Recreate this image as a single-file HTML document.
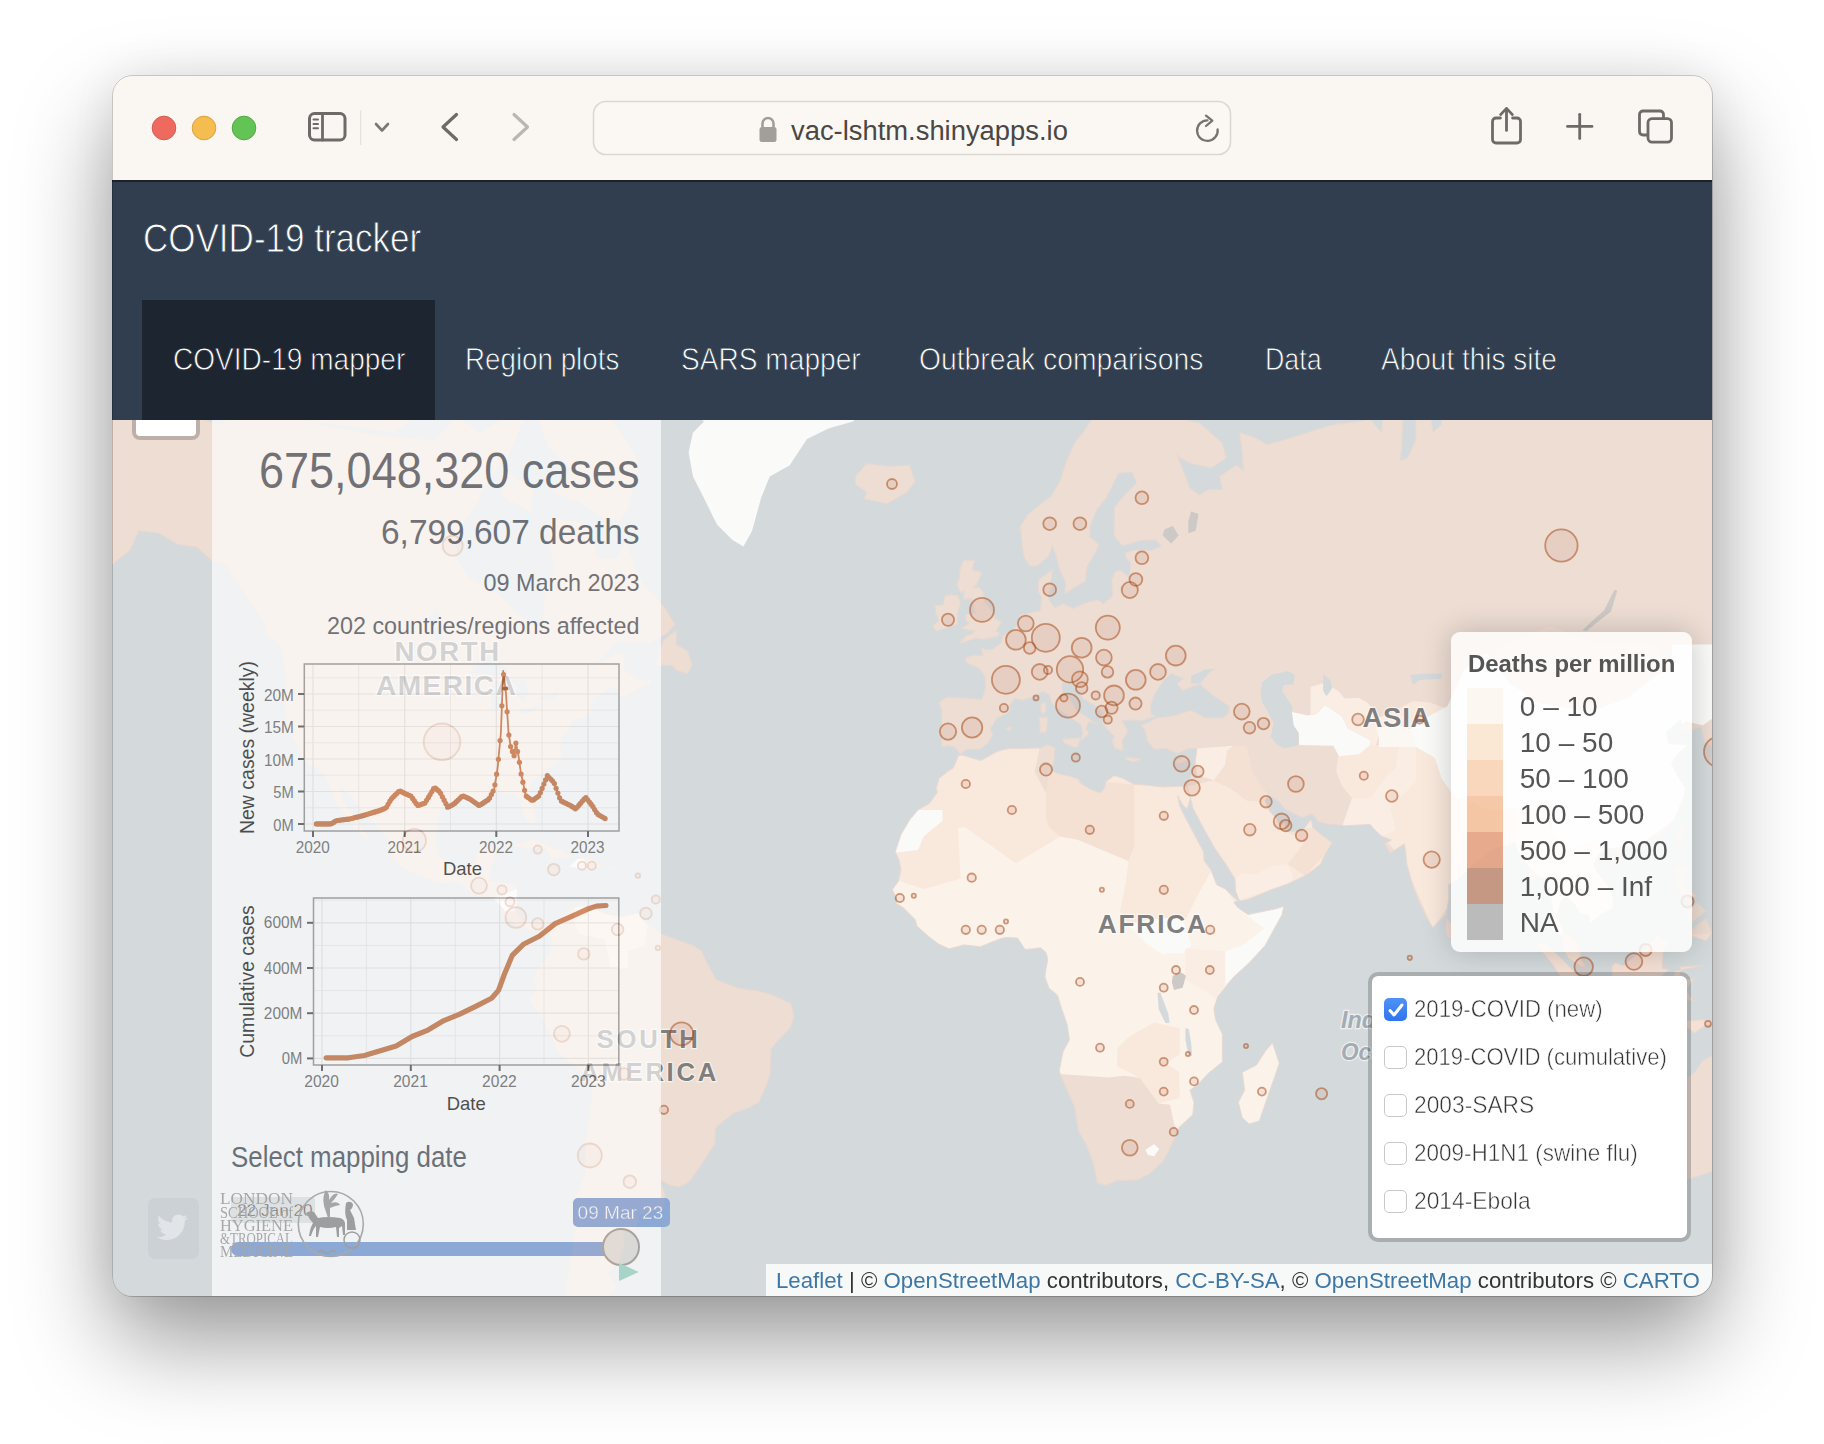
<!DOCTYPE html>
<html><head><meta charset="utf-8">
<style>
*{margin:0;padding:0;box-sizing:border-box}
html,body{width:1824px;height:1444px;background:#fff;overflow:hidden;font-family:"Liberation Sans",sans-serif}
#shadow{position:absolute;left:112px;top:75px;width:1600px;height:1221px;border-radius:20px;
 box-shadow:0 45px 95px rgba(0,0,0,0.40),0 0 45px rgba(0,0,0,0.07)}
#win{position:absolute;left:112px;top:75px;width:1600px;height:1221px;border-radius:20px;overflow:hidden;background:#faf6f1}
#border{position:absolute;left:111.5px;top:74.5px;width:1601px;height:1222px;border-radius:20.5px;border:1px solid rgba(0,0,0,0.2);pointer-events:none}
.abs{position:absolute}
.t{position:absolute;white-space:nowrap}
</style></head><body>
<div id="shadow"></div>
<div id="win">
 <div class="abs" style="left:0;top:0;width:1600px;height:105px;background:#faf6f1"><svg class="abs" style="left:-112px;top:-75px" width="1824" height="1444" viewBox="0 0 1824 1444">
<rect x="593.5" y="101.5" width="637" height="53" rx="12.5" fill="#fbf8f4" stroke="#dcd7d1" stroke-width="1.6"/>
<g stroke-width="1" >
<circle cx="164" cy="128" r="11.8" fill="#ee6a5f" stroke="#d35a4f"/>
<circle cx="204" cy="128" r="11.8" fill="#f5bd4f" stroke="#d9a23c"/>
<circle cx="244" cy="128" r="11.8" fill="#61c454" stroke="#52a844"/>
</g>
<g fill="none" stroke="#6e6a67" stroke-linecap="round" stroke-linejoin="round">
<rect x="309.5" y="113.5" width="35.5" height="26.5" rx="5" stroke-width="3"/>
<line x1="322.5" y1="114" x2="322.5" y2="140" stroke-width="2.8"/>
<line x1="313.5" y1="119.6" x2="318" y2="119.6" stroke-width="2"/>
<line x1="313.5" y1="124" x2="318" y2="124" stroke-width="2"/>
<line x1="313.5" y1="128.3" x2="318" y2="128.3" stroke-width="2"/>
<polyline points="376,124 382,130.5 388,124" stroke-width="2.6" stroke="#7b7774"/>
<polyline points="456.5,114.5 443,127 456.5,139.5" stroke-width="3.2"/>
<polyline points="514,114.5 527.5,127 514,139.5" stroke-width="3.2" stroke="#bab6b2"/>
<path d="M1500.4 118 H1496 a3.5 3.5 0 0 0 -3.5 3.5 V139.5 a3.5 3.5 0 0 0 3.5 3.5 H1517 a3.5 3.5 0 0 0 3.5 -3.5 V121.5 a3.5 3.5 0 0 0 -3.5 -3.5 H1512.6" stroke-width="2.8"/>
<line x1="1506.5" y1="109" x2="1506.5" y2="130.4" stroke-width="2.8"/>
<polyline points="1500.6,114.6 1506.5,108.4 1512.4,114.6" stroke-width="2.8"/>
<line x1="1567.5" y1="126.4" x2="1592" y2="126.4" stroke-width="2.8"/>
<line x1="1579.7" y1="114.3" x2="1579.7" y2="138.6" stroke-width="2.8"/>
<path d="M1647.5 135 H1643 a3.5 3.5 0 0 1 -3.5 -3.5 V114.5 a3.5 3.5 0 0 1 3.5 -3.5 H1660 a3.5 3.5 0 0 1 3.5 3.5 V118" stroke-width="2.8"/>
<rect x="1648" y="118.6" width="23.5" height="23.5" rx="4" stroke-width="2.8"/>
<path d="M1207.5 120.3 A10.3 10.3 0 1 0 1217.6 129.3" stroke-width="2.3" stroke="#77736f"/>
<polyline points="1206,115.6 1212.3,120.6 1206,126" stroke-width="2.3" stroke="#77736f"/>
</g>
<line x1="360.7" y1="110.5" x2="360.7" y2="145" stroke="#e3dfda" stroke-width="1.2"/>
<rect x="759.5" y="127" width="17" height="15" rx="2.5" fill="#a29e9a"/>
<path d="M762.5 128 V123.5 a5.5 5.5 0 0 1 11 0 V128" fill="none" stroke="#a29e9a" stroke-width="2.6"/>
</svg></div>
 <div class="abs" style="left:-112px;top:-75px;width:1824px;height:200px"><div class="t" style="left:791.0px;top:116.0px;font-size:28.34px;line-height:28.34px;color:#4a4744;transform:scaleX(0.9662);transform-origin:0 0;">vac-lshtm.shinyapps.io</div></div>
 <div class="abs" style="left:0;top:345px;width:1600px;height:876px;overflow:hidden">
  <svg class="abs" style="left:0;top:0" width="1600" height="876" viewBox="112 420 1600 876">
<defs><clipPath id="landclip"><path d="M100.0 386.0L189.9 414.9L218.3 424.6L263.8 405.0L326.4 426.2L377.6 435.5L434.5 440.1L457.2 416.6L480.0 432.4L508.4 416.6L525.5 416.6L505.6 462.2L501.6 462.2L480.0 496.2L476.0 505.2L456.1 533.2L456.1 558.2L468.6 577.4L497.1 592.8L523.8 618.1L542.6 631.1L543.7 597.8L554.0 566.8L548.3 539.0L551.1 518.8L576.7 521.3L593.8 533.2L596.6 558.2L616.5 558.2L625.1 541.3L642.1 582.6L664.9 607.6L675.1 624.6L667.7 632.9L650.7 642.8L616.5 642.8L596.6 663.6L622.2 651.6L625.1 657.6L623.4 670.3L645.0 681.9L650.7 677.0L650.7 682.7L619.4 698.6L616.5 686.7L610.8 688.3L593.8 697.1L590.4 705.6L593.8 712.5L582.4 717.8L571.0 721.6L570.5 729.0L562.5 736.4L559.6 747.1L562.5 759.1L551.1 766.0L542.6 772.9L531.8 781.7L528.9 791.7L534.0 808.0L536.9 817.6L534.6 825.8L528.4 822.0L522.1 811.2L521.0 800.2L514.1 794.3L502.8 792.3L488.5 793.0L482.8 798.2L484.6 801.5L477.2 800.8L462.9 796.9L453.3 799.5L440.2 809.3L438.5 820.7L435.6 843.8L440.2 857.8L445.9 865.1L454.4 868.7L468.6 866.3L475.4 860.9L477.7 851.8L491.4 848.1L497.1 849.3L494.2 860.9L490.2 869.9L489.7 881.8L502.8 882.4L514.1 884.7L517.5 888.9L517.0 902.3L515.3 911.0L522.7 919.7L531.2 923.2L539.7 919.7L548.3 921.4L552.2 924.9L548.8 932.4L548.3 931.2L536.9 931.8L528.4 929.5L517.0 925.5L504.5 916.8L503.9 909.9L494.2 899.4L482.8 896.5L471.5 893.6L462.9 884.7L453.3 880.6L443.0 883.5L431.6 880.0L417.4 874.6L403.2 868.1L391.8 857.8L393.0 848.7L389.0 840.7L377.6 827.0L363.4 811.2L352.0 798.2L339.5 785.0L343.5 801.5L354.8 817.6L366.2 833.3L369.1 839.5L363.4 836.4L354.8 828.3L343.5 811.2L337.8 808.0L328.7 785.0L325.8 778.3L317.9 768.1L305.9 764.0L299.1 752.1L295.1 741.4L287.7 726.8L284.9 710.3L286.6 677.0L282.6 658.5L280.9 644.6L266.7 635.6L263.8 621.8L249.6 602.7L243.9 592.8L232.5 577.4L224.0 563.6L212.6 561.4L196.7 547.0L178.5 544.7L158.6 533.2L138.7 530.8L130.1 550.4L115.9 561.4L98.8 577.4L76.1 592.8L59.0 600.7L93.2 569.0L93.2 555.9L70.4 544.7L56.2 539.0L50.5 521.3L56.2 506.4L76.1 489.6L53.3 488.3L36.3 474.8L70.4 462.2L61.9 452.1L44.8 435.5L70.4 411.7L93.2 393.0ZM552.2 924.9L559.6 919.7L562.5 913.9L571.0 909.3L582.4 902.9L588.1 908.1L585.2 913.9L593.8 908.1L605.2 913.9L622.2 916.2L639.3 912.8L645.0 922.6L662.0 934.1L679.1 940.4L693.3 945.5L701.9 951.2L707.6 963.8L713.2 974.0L716.1 979.7L738.8 988.2L758.8 991.1L773.0 995.1L791.2 1003.6L794.0 1016.8L790.0 1028.3L778.7 1039.9L771.3 1048.6L770.1 1075.1L765.6 1087.1L758.8 1102.3L747.4 1108.5L733.2 1113.5L716.1 1127.3L715.0 1143.3L704.7 1159.6L693.3 1176.5L687.6 1183.3L679.1 1186.8L670.6 1185.4L659.2 1179.9L664.9 1193.8L664.9 1208.0L639.3 1215.3L636.4 1230.2L622.2 1230.2L625.1 1241.6L619.4 1261.3L608.0 1273.5L616.5 1286.1L602.3 1307.9L599.5 1321.5L602.3 1330.9L593.8 1350.2L576.7 1330.9L565.3 1303.4L568.2 1269.4L573.9 1237.7L573.9 1200.9L585.2 1173.1L585.2 1140.0L590.9 1108.5L592.6 1081.1L582.4 1072.2L559.6 1054.4L548.3 1031.2L539.7 1013.9L529.5 1001.3L536.9 988.2L534.0 979.7L536.9 968.3L543.7 962.6L551.1 951.2L551.7 936.9L548.8 932.4ZM960.1 754.2L956.2 748.6L949.9 745.7L941.4 747.1L941.9 736.4L938.0 734.2L941.4 723.8L941.9 710.3L939.1 702.5L946.5 697.1L959.0 697.8L970.4 698.6L981.8 699.4L985.2 689.9L985.2 677.0L979.5 668.7L966.4 662.8L964.7 658.5L973.8 655.1L982.9 655.9L981.2 647.2L985.7 649.8L993.1 649.0L1001.1 642.8L1002.8 635.6L1010.2 632.0L1017.6 624.6L1019.9 615.2L1031.8 612.4L1040.4 610.5L1041.5 597.8L1038.1 591.8L1038.6 579.5L1052.3 570.0L1051.7 577.4L1050.0 585.7L1054.0 583.6L1047.8 594.8L1050.0 601.7L1054.6 607.6L1063.1 603.7L1072.8 608.5L1085.9 602.7L1097.8 599.8L1103.5 603.7L1112.6 595.8L1111.5 580.5L1114.9 572.2L1120.6 570.0L1129.1 577.4L1130.8 563.6L1125.7 557.1L1125.7 552.6L1133.1 550.4L1151.3 550.4L1161.5 545.9L1155.8 540.2L1142.8 540.2L1134.2 542.5L1122.3 545.9L1113.7 535.5L1114.3 524.9L1114.3 507.7L1123.4 496.2L1136.5 483.0L1131.9 472.0L1118.3 473.4L1113.2 484.3L1105.8 498.8L1097.2 508.9L1090.4 524.9L1089.8 536.7L1099.0 544.7L1095.5 552.6L1087.0 566.8L1085.3 581.6L1075.6 586.7L1064.8 593.8L1065.4 581.6L1059.7 570.0L1055.7 554.8L1052.3 545.9L1048.9 555.9L1037.5 565.8L1029.5 565.8L1023.9 557.1L1021.6 540.2L1020.4 526.1L1027.3 515.2L1040.4 503.9L1051.2 496.2L1060.3 480.3L1066.0 462.2L1074.5 443.1L1083.0 432.4L1097.2 411.7L1117.2 403.3L1138.8 389.5L1151.3 391.3L1168.4 403.3L1179.7 418.2L1199.6 423.0L1222.4 443.1L1226.4 457.9L1211.6 467.9L1191.1 463.6L1179.7 457.9L1176.9 453.5L1190.0 488.3L1199.6 494.9L1208.2 489.6L1222.4 489.6L1219.6 476.2L1236.6 465.0L1243.4 470.6L1242.3 453.5L1239.5 432.4L1253.7 437.1L1267.9 444.6L1293.5 437.1L1322.0 427.8L1333.3 424.6L1370.3 419.8L1381.7 432.4L1384.5 354.4L1404.4 358.3L1404.4 391.3L1401.6 447.6L1400.5 460.8L1407.3 457.9L1415.8 440.1L1415.8 408.3L1410.1 382.4L1430.0 364.0L1435.7 391.3L1430.0 411.7L1432.9 432.4L1441.4 424.6L1447.1 354.4L1560.9 266.0L1634.8 344.6L1731.6 391.3L1845.3 373.4L1902.2 408.3L1959.1 408.3L2016.0 424.6L2016.0 483.0L2004.6 515.2L1930.7 544.7L1919.3 587.7L1882.3 635.6L1879.5 572.2L1873.8 552.6L1834.0 552.6L1794.1 555.9L1760.0 602.7L1791.3 617.1L1795.8 661.9L1788.4 670.3L1760.0 700.2L1742.4 701.8L1735.5 708.0L1729.8 719.4L1723.0 736.4L1728.7 750.7L1727.0 759.8L1717.3 764.7L1710.5 764.0L1711.6 747.1L1704.2 741.4L1701.4 726.8L1683.2 732.7L1680.4 720.1L1666.1 732.0L1669.0 743.6L1688.9 745.0L1677.5 754.2L1671.3 763.3L1679.2 778.3L1685.5 788.4L1683.2 804.7L1673.0 821.4L1660.4 835.8L1641.7 843.8L1623.5 849.9L1618.9 856.0L1611.0 848.1L1599.0 854.8L1593.9 863.9L1597.9 872.9L1608.1 884.7L1613.8 899.4L1613.2 908.1L1600.7 915.1L1589.3 924.3L1589.3 915.7L1580.2 913.4L1574.0 904.1L1566.0 897.1L1560.9 902.3L1556.3 916.8L1562.6 926.6L1563.7 934.1L1569.4 935.2L1575.7 939.8L1580.2 948.4L1580.2 958.1L1585.4 966.0L1580.8 966.6L1568.3 958.1L1563.2 948.4L1563.2 938.1L1559.8 935.2L1551.2 928.3L1552.9 913.9L1550.6 896.5L1547.2 878.8L1539.3 877.0L1533.6 883.0L1528.5 880.6L1527.9 865.1L1520.5 856.0L1516.5 848.7L1514.8 842.0L1506.8 845.7L1498.3 847.5L1486.4 854.2L1475.6 862.1L1460.2 878.2L1448.8 884.7L1448.8 899.4L1446.0 915.1L1436.9 923.2L1432.9 927.8L1426.1 917.4L1418.7 901.2L1413.0 886.5L1406.7 863.9L1405.6 851.8L1404.4 843.8L1390.2 853.0L1384.5 843.8L1391.4 840.1L1381.7 836.4L1373.2 828.3L1370.3 824.5L1344.7 825.8L1326.5 823.9L1318.0 821.4L1312.3 813.7L1302.0 817.6L1285.5 809.3L1277.6 800.2L1268.5 795.6L1265.1 800.2L1269.6 811.2L1277.0 819.5L1279.9 827.0L1285.0 821.4L1285.5 831.4L1301.5 831.4L1306.6 825.2L1311.1 819.5L1312.9 827.7L1320.8 834.5L1332.2 842.6L1324.8 854.8L1320.8 863.9L1313.4 869.9L1304.9 875.8L1289.0 883.5L1270.8 890.0L1248.0 899.4L1239.5 901.2L1235.5 890.6L1234.9 878.8L1226.4 865.1L1215.0 848.7L1203.6 828.3L1192.8 808.0L1190.5 798.2L1186.6 786.4L1190.5 776.3L1194.0 768.8L1195.7 757.7L1196.8 748.6L1188.8 748.6L1176.9 753.5L1166.1 748.6L1154.1 749.3L1147.3 740.7L1144.5 729.0L1141.0 725.3L1148.4 722.4L1157.0 717.8L1171.2 716.3L1191.1 710.3L1205.3 717.8L1222.4 717.8L1228.7 713.3L1229.2 706.4L1218.4 699.4L1205.3 689.1L1200.2 684.3L1194.0 685.9L1182.6 690.7L1176.9 683.5L1183.7 678.6L1171.2 673.7L1163.8 680.2L1160.4 685.1L1154.7 694.7L1150.7 704.9L1151.3 714.1L1156.4 716.0L1141.6 720.9L1128.5 720.1L1122.3 720.9L1128.0 731.2L1122.3 740.7L1123.4 750.7L1114.9 748.6L1112.0 740.7L1114.3 736.4L1107.5 729.8L1102.4 722.4L1102.9 712.5L1097.2 707.2L1083.0 698.6L1075.1 686.7L1069.9 681.9L1062.0 683.5L1062.5 693.1L1069.4 697.8L1076.2 710.3L1083.6 714.8L1097.2 724.6L1088.7 721.6L1085.9 729.0L1089.3 733.4L1080.7 740.7L1082.5 734.2L1081.3 725.3L1073.4 719.4L1063.1 712.5L1051.7 703.3L1049.5 694.7L1042.1 691.5L1034.7 696.3L1022.2 700.2L1014.8 698.6L1009.1 705.6L1010.2 711.0L1004.5 714.8L997.1 717.8L990.3 729.0L993.1 734.9L988.0 742.9L980.1 749.3L967.0 749.3ZM958.4 755.6L953.3 768.1L948.8 770.8L939.1 778.3L936.2 788.4L937.4 792.3L929.4 803.4L918.0 809.9L909.5 820.1L901.0 834.5L895.3 851.8L899.3 860.9L901.0 869.9L898.1 881.8L892.4 889.4L897.0 899.4L896.4 903.5L903.8 908.1L909.5 913.9L915.2 919.7L916.9 926.0L926.6 934.7L938.0 943.8L949.3 948.9L963.6 944.9L980.6 946.7L992.0 942.1L1000.5 938.7L1006.2 937.5L1017.6 938.1L1025.0 949.5L1031.8 948.9L1040.4 947.8L1046.0 952.4L1047.8 959.8L1046.0 968.3L1044.9 976.8L1048.9 988.2L1057.4 995.1L1061.4 1008.2L1067.1 1024.3L1069.4 1039.9L1063.1 1051.5L1059.1 1071.0L1063.1 1081.1L1074.5 1106.7L1078.5 1131.1L1085.9 1143.9L1093.3 1163.0L1096.7 1179.2L1097.2 1182.6L1105.8 1185.4L1117.2 1180.6L1137.6 1179.9L1150.7 1173.1L1162.7 1161.6L1168.4 1151.7L1179.2 1127.3L1192.8 1114.7L1194.0 1102.3L1190.0 1090.2L1199.6 1082.9L1207.6 1073.9L1222.4 1062.1L1222.4 1034.1L1215.6 1019.7L1213.9 1008.2L1217.8 996.8L1228.1 983.7L1233.8 976.8L1249.7 962.6L1265.1 945.5L1282.1 914.5L1283.8 906.4L1273.6 909.3L1248.0 914.5L1238.3 908.1L1233.8 902.3L1237.8 901.2L1225.2 888.9L1216.7 884.7L1211.0 869.9L1204.2 860.9L1203.6 851.8L1194.0 833.9L1185.4 817.6L1179.7 806.0L1177.5 795.6L1182.6 804.7L1187.1 809.3L1190.5 798.2L1186.6 786.4L1175.8 786.4L1162.1 787.0L1145.6 785.0L1134.2 784.4L1122.8 778.3L1114.3 775.6L1105.8 781.7L1104.6 788.4L1100.1 793.0L1088.7 788.4L1080.2 783.0L1078.5 779.0L1067.1 775.6L1057.4 773.6L1050.0 770.2L1054.0 761.2L1055.1 747.9L1050.0 745.7L1047.8 745.0L1040.4 747.9L1020.4 748.6L1009.1 748.6L997.7 750.7L988.6 756.3L980.6 760.5L961.8 754.9ZM959.6 643.7L968.1 641.0L974.9 638.3L983.5 639.2L997.7 636.5L1000.0 632.9L996.0 631.1L1001.7 621.8L994.3 618.1L993.1 612.4L984.6 601.7L982.9 591.8L979.5 587.7L973.8 587.7L977.8 582.6L981.8 572.2L972.1 570.0L974.9 560.3L963.6 560.3L960.1 569.0L959.0 579.5L956.7 584.7L960.7 592.8L964.1 590.8L963.0 598.8L972.1 598.8L972.7 604.7L975.5 613.3L965.8 614.3L965.3 619.0L968.7 623.7L961.8 628.3L969.2 630.2L974.9 631.1L972.1 633.8L965.8 635.6ZM957.9 624.6L957.3 614.3L960.7 602.7L957.9 595.8L950.5 594.8L944.8 595.8L943.1 604.7L935.1 605.6L935.7 613.3L939.1 620.9L932.8 625.6L936.2 631.1L945.4 628.3L955.6 624.6ZM855.5 476.2L866.8 463.6L889.6 466.4L909.5 465.0L915.2 481.6L906.7 492.3L886.8 503.9L864.0 498.8L866.8 492.3L855.5 484.3ZM654.1 665.3L659.2 653.3L663.2 640.1L676.3 630.2L676.3 644.6L687.6 650.7L692.2 665.3L687.6 673.7L676.3 670.3L671.7 665.3ZM509.0 846.3L525.5 841.3L534.0 838.9L551.1 846.9L562.5 851.2L569.9 856.6L551.1 858.4L545.4 848.7L528.4 847.5L517.0 846.9ZM568.7 866.9L577.8 858.4L593.8 859.7L602.9 866.3L588.1 869.9L579.6 868.7ZM546.6 868.1L558.5 869.9L554.0 871.7ZM609.7 866.9L618.8 868.1L613.7 870.5ZM1062.5 739.2L1080.7 737.8L1077.9 747.1L1073.4 747.1L1063.7 742.9ZM1038.6 717.1L1047.8 717.8L1046.6 732.0L1039.8 732.7L1039.8 722.4ZM1040.9 703.3L1045.5 702.5L1046.0 710.3L1043.8 714.8L1040.9 711.0ZM1125.7 757.0L1141.6 759.1L1133.7 761.9L1126.3 759.8ZM1175.8 760.5L1188.8 756.3L1184.9 761.9L1177.5 763.3ZM1005.7 728.3L1011.3 726.8L1010.2 730.5L1006.8 729.8ZM1272.5 1042.8L1279.3 1063.3L1275.3 1075.1L1266.8 1099.3L1259.4 1121.0L1249.1 1124.1L1242.3 1117.8L1238.3 1102.3L1244.6 1090.2L1242.3 1072.2L1256.5 1065.0L1265.1 1051.5ZM1446.5 918.0L1457.9 931.2L1453.9 938.7L1447.1 936.9L1445.4 928.3ZM1534.2 942.1L1546.7 944.4L1562.6 959.8L1581.9 979.7L1595.0 991.1L1593.9 1007.1L1586.5 1007.6L1574.0 996.8L1562.6 979.7L1552.4 964.3ZM1590.5 1012.8L1595.0 1008.2L1608.1 1009.9L1623.5 1010.5L1632.6 1013.3L1642.8 1017.9L1643.4 1023.7L1623.5 1021.4L1606.4 1018.5L1592.2 1013.3ZM1612.1 965.5L1615.5 962.6L1623.5 965.5L1634.8 955.8L1648.5 945.5L1657.6 934.1L1670.7 943.8L1663.3 948.4L1662.2 968.3L1669.0 969.4L1660.4 976.8L1654.8 988.2L1651.9 996.8L1643.4 995.1L1626.3 991.1L1618.9 990.5L1612.1 976.8ZM1671.8 1005.3L1677.5 1005.9L1677.5 989.9L1683.2 999.6L1692.9 1000.8L1686.0 989.9L1693.4 979.1L1680.4 979.1L1680.4 966.6L1704.2 965.5L1674.7 971.2L1671.8 982.5ZM1646.2 1020.8L1657.6 1022.5L1669.0 1022.0L1686.0 1020.8L1703.1 1019.7L1715.6 1022.0L1703.1 1027.1L1694.6 1032.9L1683.2 1024.8L1669.0 1024.8L1654.8 1024.8ZM1737.2 980.8L1754.3 978.6L1777.1 982.5L1794.1 988.8L1828.3 1008.2L1845.3 1034.1L1805.5 1025.4L1794.1 1026.6L1777.1 1021.4L1771.4 1002.5L1748.6 996.8L1742.9 988.2ZM1674.7 866.9L1687.8 866.9L1686.0 875.8L1683.2 884.7L1697.4 896.5L1686.0 896.5L1678.1 891.8L1674.7 881.8ZM1686.0 934.1L1706.0 918.0L1712.2 932.9L1706.0 940.9L1697.4 938.1ZM1686.0 913.9L1697.4 902.3L1706.0 911.0L1697.4 918.0L1691.7 922.6ZM1675.2 839.5L1680.4 825.8L1686.0 827.0L1679.8 845.7ZM1609.8 862.7L1620.6 857.2L1623.5 860.3L1614.9 868.7ZM1637.7 1102.3L1641.7 1101.1L1656.5 1093.8L1674.7 1089.0L1687.2 1078.1L1694.6 1072.2L1703.1 1060.3L1714.5 1054.4L1728.7 1059.7L1734.4 1045.7L1745.8 1039.9L1771.4 1042.8L1765.7 1060.3L1788.4 1076.3L1799.8 1035.8L1822.6 1081.1L1865.2 1140.0L1845.3 1204.4L1825.4 1215.3L1794.1 1210.2L1777.1 1190.3L1762.8 1185.4L1737.2 1163.0L1697.4 1176.5L1663.3 1186.8L1646.2 1182.0L1650.2 1166.3L1643.9 1140.0L1637.7 1117.8ZM1731.6 788.4L1740.1 786.4L1742.9 769.5L1760.0 771.5L1788.4 761.2L1797.0 736.4L1797.0 714.1L1788.4 721.6L1782.8 740.0L1768.5 747.1L1748.6 757.7L1734.4 764.7ZM619.4 521.3L627.9 508.9L639.3 462.2L610.8 416.6L588.1 399.9L536.9 344.6L485.7 354.4L514.1 408.3L536.9 416.6L548.3 447.6L571.0 469.3L551.1 492.3L579.6 502.6L605.2 518.8ZM502.8 496.2L531.2 512.7L534.0 489.6L502.8 469.3ZM280.9 416.6L394.7 432.4L451.6 391.3L423.1 290.4L309.3 313.1Z"/></clipPath></defs>
<rect x="112" y="420" width="1600" height="876" fill="#d4dadc"/>
<path d="M100.0 386.0L189.9 414.9L218.3 424.6L263.8 405.0L326.4 426.2L377.6 435.5L434.5 440.1L457.2 416.6L480.0 432.4L508.4 416.6L525.5 416.6L505.6 462.2L501.6 462.2L480.0 496.2L476.0 505.2L456.1 533.2L456.1 558.2L468.6 577.4L497.1 592.8L523.8 618.1L542.6 631.1L543.7 597.8L554.0 566.8L548.3 539.0L551.1 518.8L576.7 521.3L593.8 533.2L596.6 558.2L616.5 558.2L625.1 541.3L642.1 582.6L664.9 607.6L675.1 624.6L667.7 632.9L650.7 642.8L616.5 642.8L596.6 663.6L622.2 651.6L625.1 657.6L623.4 670.3L645.0 681.9L650.7 677.0L650.7 682.7L619.4 698.6L616.5 686.7L610.8 688.3L593.8 697.1L590.4 705.6L593.8 712.5L582.4 717.8L571.0 721.6L570.5 729.0L562.5 736.4L559.6 747.1L562.5 759.1L551.1 766.0L542.6 772.9L531.8 781.7L528.9 791.7L534.0 808.0L536.9 817.6L534.6 825.8L528.4 822.0L522.1 811.2L521.0 800.2L514.1 794.3L502.8 792.3L488.5 793.0L482.8 798.2L484.6 801.5L477.2 800.8L462.9 796.9L453.3 799.5L440.2 809.3L438.5 820.7L435.6 843.8L440.2 857.8L445.9 865.1L454.4 868.7L468.6 866.3L475.4 860.9L477.7 851.8L491.4 848.1L497.1 849.3L494.2 860.9L490.2 869.9L489.7 881.8L502.8 882.4L514.1 884.7L517.5 888.9L517.0 902.3L515.3 911.0L522.7 919.7L531.2 923.2L539.7 919.7L548.3 921.4L552.2 924.9L548.8 932.4L548.3 931.2L536.9 931.8L528.4 929.5L517.0 925.5L504.5 916.8L503.9 909.9L494.2 899.4L482.8 896.5L471.5 893.6L462.9 884.7L453.3 880.6L443.0 883.5L431.6 880.0L417.4 874.6L403.2 868.1L391.8 857.8L393.0 848.7L389.0 840.7L377.6 827.0L363.4 811.2L352.0 798.2L339.5 785.0L343.5 801.5L354.8 817.6L366.2 833.3L369.1 839.5L363.4 836.4L354.8 828.3L343.5 811.2L337.8 808.0L328.7 785.0L325.8 778.3L317.9 768.1L305.9 764.0L299.1 752.1L295.1 741.4L287.7 726.8L284.9 710.3L286.6 677.0L282.6 658.5L280.9 644.6L266.7 635.6L263.8 621.8L249.6 602.7L243.9 592.8L232.5 577.4L224.0 563.6L212.6 561.4L196.7 547.0L178.5 544.7L158.6 533.2L138.7 530.8L130.1 550.4L115.9 561.4L98.8 577.4L76.1 592.8L59.0 600.7L93.2 569.0L93.2 555.9L70.4 544.7L56.2 539.0L50.5 521.3L56.2 506.4L76.1 489.6L53.3 488.3L36.3 474.8L70.4 462.2L61.9 452.1L44.8 435.5L70.4 411.7L93.2 393.0ZM552.2 924.9L559.6 919.7L562.5 913.9L571.0 909.3L582.4 902.9L588.1 908.1L585.2 913.9L593.8 908.1L605.2 913.9L622.2 916.2L639.3 912.8L645.0 922.6L662.0 934.1L679.1 940.4L693.3 945.5L701.9 951.2L707.6 963.8L713.2 974.0L716.1 979.7L738.8 988.2L758.8 991.1L773.0 995.1L791.2 1003.6L794.0 1016.8L790.0 1028.3L778.7 1039.9L771.3 1048.6L770.1 1075.1L765.6 1087.1L758.8 1102.3L747.4 1108.5L733.2 1113.5L716.1 1127.3L715.0 1143.3L704.7 1159.6L693.3 1176.5L687.6 1183.3L679.1 1186.8L670.6 1185.4L659.2 1179.9L664.9 1193.8L664.9 1208.0L639.3 1215.3L636.4 1230.2L622.2 1230.2L625.1 1241.6L619.4 1261.3L608.0 1273.5L616.5 1286.1L602.3 1307.9L599.5 1321.5L602.3 1330.9L593.8 1350.2L576.7 1330.9L565.3 1303.4L568.2 1269.4L573.9 1237.7L573.9 1200.9L585.2 1173.1L585.2 1140.0L590.9 1108.5L592.6 1081.1L582.4 1072.2L559.6 1054.4L548.3 1031.2L539.7 1013.9L529.5 1001.3L536.9 988.2L534.0 979.7L536.9 968.3L543.7 962.6L551.1 951.2L551.7 936.9L548.8 932.4ZM960.1 754.2L956.2 748.6L949.9 745.7L941.4 747.1L941.9 736.4L938.0 734.2L941.4 723.8L941.9 710.3L939.1 702.5L946.5 697.1L959.0 697.8L970.4 698.6L981.8 699.4L985.2 689.9L985.2 677.0L979.5 668.7L966.4 662.8L964.7 658.5L973.8 655.1L982.9 655.9L981.2 647.2L985.7 649.8L993.1 649.0L1001.1 642.8L1002.8 635.6L1010.2 632.0L1017.6 624.6L1019.9 615.2L1031.8 612.4L1040.4 610.5L1041.5 597.8L1038.1 591.8L1038.6 579.5L1052.3 570.0L1051.7 577.4L1050.0 585.7L1054.0 583.6L1047.8 594.8L1050.0 601.7L1054.6 607.6L1063.1 603.7L1072.8 608.5L1085.9 602.7L1097.8 599.8L1103.5 603.7L1112.6 595.8L1111.5 580.5L1114.9 572.2L1120.6 570.0L1129.1 577.4L1130.8 563.6L1125.7 557.1L1125.7 552.6L1133.1 550.4L1151.3 550.4L1161.5 545.9L1155.8 540.2L1142.8 540.2L1134.2 542.5L1122.3 545.9L1113.7 535.5L1114.3 524.9L1114.3 507.7L1123.4 496.2L1136.5 483.0L1131.9 472.0L1118.3 473.4L1113.2 484.3L1105.8 498.8L1097.2 508.9L1090.4 524.9L1089.8 536.7L1099.0 544.7L1095.5 552.6L1087.0 566.8L1085.3 581.6L1075.6 586.7L1064.8 593.8L1065.4 581.6L1059.7 570.0L1055.7 554.8L1052.3 545.9L1048.9 555.9L1037.5 565.8L1029.5 565.8L1023.9 557.1L1021.6 540.2L1020.4 526.1L1027.3 515.2L1040.4 503.9L1051.2 496.2L1060.3 480.3L1066.0 462.2L1074.5 443.1L1083.0 432.4L1097.2 411.7L1117.2 403.3L1138.8 389.5L1151.3 391.3L1168.4 403.3L1179.7 418.2L1199.6 423.0L1222.4 443.1L1226.4 457.9L1211.6 467.9L1191.1 463.6L1179.7 457.9L1176.9 453.5L1190.0 488.3L1199.6 494.9L1208.2 489.6L1222.4 489.6L1219.6 476.2L1236.6 465.0L1243.4 470.6L1242.3 453.5L1239.5 432.4L1253.7 437.1L1267.9 444.6L1293.5 437.1L1322.0 427.8L1333.3 424.6L1370.3 419.8L1381.7 432.4L1384.5 354.4L1404.4 358.3L1404.4 391.3L1401.6 447.6L1400.5 460.8L1407.3 457.9L1415.8 440.1L1415.8 408.3L1410.1 382.4L1430.0 364.0L1435.7 391.3L1430.0 411.7L1432.9 432.4L1441.4 424.6L1447.1 354.4L1560.9 266.0L1634.8 344.6L1731.6 391.3L1845.3 373.4L1902.2 408.3L1959.1 408.3L2016.0 424.6L2016.0 483.0L2004.6 515.2L1930.7 544.7L1919.3 587.7L1882.3 635.6L1879.5 572.2L1873.8 552.6L1834.0 552.6L1794.1 555.9L1760.0 602.7L1791.3 617.1L1795.8 661.9L1788.4 670.3L1760.0 700.2L1742.4 701.8L1735.5 708.0L1729.8 719.4L1723.0 736.4L1728.7 750.7L1727.0 759.8L1717.3 764.7L1710.5 764.0L1711.6 747.1L1704.2 741.4L1701.4 726.8L1683.2 732.7L1680.4 720.1L1666.1 732.0L1669.0 743.6L1688.9 745.0L1677.5 754.2L1671.3 763.3L1679.2 778.3L1685.5 788.4L1683.2 804.7L1673.0 821.4L1660.4 835.8L1641.7 843.8L1623.5 849.9L1618.9 856.0L1611.0 848.1L1599.0 854.8L1593.9 863.9L1597.9 872.9L1608.1 884.7L1613.8 899.4L1613.2 908.1L1600.7 915.1L1589.3 924.3L1589.3 915.7L1580.2 913.4L1574.0 904.1L1566.0 897.1L1560.9 902.3L1556.3 916.8L1562.6 926.6L1563.7 934.1L1569.4 935.2L1575.7 939.8L1580.2 948.4L1580.2 958.1L1585.4 966.0L1580.8 966.6L1568.3 958.1L1563.2 948.4L1563.2 938.1L1559.8 935.2L1551.2 928.3L1552.9 913.9L1550.6 896.5L1547.2 878.8L1539.3 877.0L1533.6 883.0L1528.5 880.6L1527.9 865.1L1520.5 856.0L1516.5 848.7L1514.8 842.0L1506.8 845.7L1498.3 847.5L1486.4 854.2L1475.6 862.1L1460.2 878.2L1448.8 884.7L1448.8 899.4L1446.0 915.1L1436.9 923.2L1432.9 927.8L1426.1 917.4L1418.7 901.2L1413.0 886.5L1406.7 863.9L1405.6 851.8L1404.4 843.8L1390.2 853.0L1384.5 843.8L1391.4 840.1L1381.7 836.4L1373.2 828.3L1370.3 824.5L1344.7 825.8L1326.5 823.9L1318.0 821.4L1312.3 813.7L1302.0 817.6L1285.5 809.3L1277.6 800.2L1268.5 795.6L1265.1 800.2L1269.6 811.2L1277.0 819.5L1279.9 827.0L1285.0 821.4L1285.5 831.4L1301.5 831.4L1306.6 825.2L1311.1 819.5L1312.9 827.7L1320.8 834.5L1332.2 842.6L1324.8 854.8L1320.8 863.9L1313.4 869.9L1304.9 875.8L1289.0 883.5L1270.8 890.0L1248.0 899.4L1239.5 901.2L1235.5 890.6L1234.9 878.8L1226.4 865.1L1215.0 848.7L1203.6 828.3L1192.8 808.0L1190.5 798.2L1186.6 786.4L1190.5 776.3L1194.0 768.8L1195.7 757.7L1196.8 748.6L1188.8 748.6L1176.9 753.5L1166.1 748.6L1154.1 749.3L1147.3 740.7L1144.5 729.0L1141.0 725.3L1148.4 722.4L1157.0 717.8L1171.2 716.3L1191.1 710.3L1205.3 717.8L1222.4 717.8L1228.7 713.3L1229.2 706.4L1218.4 699.4L1205.3 689.1L1200.2 684.3L1194.0 685.9L1182.6 690.7L1176.9 683.5L1183.7 678.6L1171.2 673.7L1163.8 680.2L1160.4 685.1L1154.7 694.7L1150.7 704.9L1151.3 714.1L1156.4 716.0L1141.6 720.9L1128.5 720.1L1122.3 720.9L1128.0 731.2L1122.3 740.7L1123.4 750.7L1114.9 748.6L1112.0 740.7L1114.3 736.4L1107.5 729.8L1102.4 722.4L1102.9 712.5L1097.2 707.2L1083.0 698.6L1075.1 686.7L1069.9 681.9L1062.0 683.5L1062.5 693.1L1069.4 697.8L1076.2 710.3L1083.6 714.8L1097.2 724.6L1088.7 721.6L1085.9 729.0L1089.3 733.4L1080.7 740.7L1082.5 734.2L1081.3 725.3L1073.4 719.4L1063.1 712.5L1051.7 703.3L1049.5 694.7L1042.1 691.5L1034.7 696.3L1022.2 700.2L1014.8 698.6L1009.1 705.6L1010.2 711.0L1004.5 714.8L997.1 717.8L990.3 729.0L993.1 734.9L988.0 742.9L980.1 749.3L967.0 749.3ZM958.4 755.6L953.3 768.1L948.8 770.8L939.1 778.3L936.2 788.4L937.4 792.3L929.4 803.4L918.0 809.9L909.5 820.1L901.0 834.5L895.3 851.8L899.3 860.9L901.0 869.9L898.1 881.8L892.4 889.4L897.0 899.4L896.4 903.5L903.8 908.1L909.5 913.9L915.2 919.7L916.9 926.0L926.6 934.7L938.0 943.8L949.3 948.9L963.6 944.9L980.6 946.7L992.0 942.1L1000.5 938.7L1006.2 937.5L1017.6 938.1L1025.0 949.5L1031.8 948.9L1040.4 947.8L1046.0 952.4L1047.8 959.8L1046.0 968.3L1044.9 976.8L1048.9 988.2L1057.4 995.1L1061.4 1008.2L1067.1 1024.3L1069.4 1039.9L1063.1 1051.5L1059.1 1071.0L1063.1 1081.1L1074.5 1106.7L1078.5 1131.1L1085.9 1143.9L1093.3 1163.0L1096.7 1179.2L1097.2 1182.6L1105.8 1185.4L1117.2 1180.6L1137.6 1179.9L1150.7 1173.1L1162.7 1161.6L1168.4 1151.7L1179.2 1127.3L1192.8 1114.7L1194.0 1102.3L1190.0 1090.2L1199.6 1082.9L1207.6 1073.9L1222.4 1062.1L1222.4 1034.1L1215.6 1019.7L1213.9 1008.2L1217.8 996.8L1228.1 983.7L1233.8 976.8L1249.7 962.6L1265.1 945.5L1282.1 914.5L1283.8 906.4L1273.6 909.3L1248.0 914.5L1238.3 908.1L1233.8 902.3L1237.8 901.2L1225.2 888.9L1216.7 884.7L1211.0 869.9L1204.2 860.9L1203.6 851.8L1194.0 833.9L1185.4 817.6L1179.7 806.0L1177.5 795.6L1182.6 804.7L1187.1 809.3L1190.5 798.2L1186.6 786.4L1175.8 786.4L1162.1 787.0L1145.6 785.0L1134.2 784.4L1122.8 778.3L1114.3 775.6L1105.8 781.7L1104.6 788.4L1100.1 793.0L1088.7 788.4L1080.2 783.0L1078.5 779.0L1067.1 775.6L1057.4 773.6L1050.0 770.2L1054.0 761.2L1055.1 747.9L1050.0 745.7L1047.8 745.0L1040.4 747.9L1020.4 748.6L1009.1 748.6L997.7 750.7L988.6 756.3L980.6 760.5L961.8 754.9ZM959.6 643.7L968.1 641.0L974.9 638.3L983.5 639.2L997.7 636.5L1000.0 632.9L996.0 631.1L1001.7 621.8L994.3 618.1L993.1 612.4L984.6 601.7L982.9 591.8L979.5 587.7L973.8 587.7L977.8 582.6L981.8 572.2L972.1 570.0L974.9 560.3L963.6 560.3L960.1 569.0L959.0 579.5L956.7 584.7L960.7 592.8L964.1 590.8L963.0 598.8L972.1 598.8L972.7 604.7L975.5 613.3L965.8 614.3L965.3 619.0L968.7 623.7L961.8 628.3L969.2 630.2L974.9 631.1L972.1 633.8L965.8 635.6ZM957.9 624.6L957.3 614.3L960.7 602.7L957.9 595.8L950.5 594.8L944.8 595.8L943.1 604.7L935.1 605.6L935.7 613.3L939.1 620.9L932.8 625.6L936.2 631.1L945.4 628.3L955.6 624.6ZM855.5 476.2L866.8 463.6L889.6 466.4L909.5 465.0L915.2 481.6L906.7 492.3L886.8 503.9L864.0 498.8L866.8 492.3L855.5 484.3ZM654.1 665.3L659.2 653.3L663.2 640.1L676.3 630.2L676.3 644.6L687.6 650.7L692.2 665.3L687.6 673.7L676.3 670.3L671.7 665.3ZM509.0 846.3L525.5 841.3L534.0 838.9L551.1 846.9L562.5 851.2L569.9 856.6L551.1 858.4L545.4 848.7L528.4 847.5L517.0 846.9ZM568.7 866.9L577.8 858.4L593.8 859.7L602.9 866.3L588.1 869.9L579.6 868.7ZM546.6 868.1L558.5 869.9L554.0 871.7ZM609.7 866.9L618.8 868.1L613.7 870.5ZM1062.5 739.2L1080.7 737.8L1077.9 747.1L1073.4 747.1L1063.7 742.9ZM1038.6 717.1L1047.8 717.8L1046.6 732.0L1039.8 732.7L1039.8 722.4ZM1040.9 703.3L1045.5 702.5L1046.0 710.3L1043.8 714.8L1040.9 711.0ZM1125.7 757.0L1141.6 759.1L1133.7 761.9L1126.3 759.8ZM1175.8 760.5L1188.8 756.3L1184.9 761.9L1177.5 763.3ZM1005.7 728.3L1011.3 726.8L1010.2 730.5L1006.8 729.8ZM1272.5 1042.8L1279.3 1063.3L1275.3 1075.1L1266.8 1099.3L1259.4 1121.0L1249.1 1124.1L1242.3 1117.8L1238.3 1102.3L1244.6 1090.2L1242.3 1072.2L1256.5 1065.0L1265.1 1051.5ZM1446.5 918.0L1457.9 931.2L1453.9 938.7L1447.1 936.9L1445.4 928.3ZM1534.2 942.1L1546.7 944.4L1562.6 959.8L1581.9 979.7L1595.0 991.1L1593.9 1007.1L1586.5 1007.6L1574.0 996.8L1562.6 979.7L1552.4 964.3ZM1590.5 1012.8L1595.0 1008.2L1608.1 1009.9L1623.5 1010.5L1632.6 1013.3L1642.8 1017.9L1643.4 1023.7L1623.5 1021.4L1606.4 1018.5L1592.2 1013.3ZM1612.1 965.5L1615.5 962.6L1623.5 965.5L1634.8 955.8L1648.5 945.5L1657.6 934.1L1670.7 943.8L1663.3 948.4L1662.2 968.3L1669.0 969.4L1660.4 976.8L1654.8 988.2L1651.9 996.8L1643.4 995.1L1626.3 991.1L1618.9 990.5L1612.1 976.8ZM1671.8 1005.3L1677.5 1005.9L1677.5 989.9L1683.2 999.6L1692.9 1000.8L1686.0 989.9L1693.4 979.1L1680.4 979.1L1680.4 966.6L1704.2 965.5L1674.7 971.2L1671.8 982.5ZM1646.2 1020.8L1657.6 1022.5L1669.0 1022.0L1686.0 1020.8L1703.1 1019.7L1715.6 1022.0L1703.1 1027.1L1694.6 1032.9L1683.2 1024.8L1669.0 1024.8L1654.8 1024.8ZM1737.2 980.8L1754.3 978.6L1777.1 982.5L1794.1 988.8L1828.3 1008.2L1845.3 1034.1L1805.5 1025.4L1794.1 1026.6L1777.1 1021.4L1771.4 1002.5L1748.6 996.8L1742.9 988.2ZM1674.7 866.9L1687.8 866.9L1686.0 875.8L1683.2 884.7L1697.4 896.5L1686.0 896.5L1678.1 891.8L1674.7 881.8ZM1686.0 934.1L1706.0 918.0L1712.2 932.9L1706.0 940.9L1697.4 938.1ZM1686.0 913.9L1697.4 902.3L1706.0 911.0L1697.4 918.0L1691.7 922.6ZM1675.2 839.5L1680.4 825.8L1686.0 827.0L1679.8 845.7ZM1609.8 862.7L1620.6 857.2L1623.5 860.3L1614.9 868.7ZM1637.7 1102.3L1641.7 1101.1L1656.5 1093.8L1674.7 1089.0L1687.2 1078.1L1694.6 1072.2L1703.1 1060.3L1714.5 1054.4L1728.7 1059.7L1734.4 1045.7L1745.8 1039.9L1771.4 1042.8L1765.7 1060.3L1788.4 1076.3L1799.8 1035.8L1822.6 1081.1L1865.2 1140.0L1845.3 1204.4L1825.4 1215.3L1794.1 1210.2L1777.1 1190.3L1762.8 1185.4L1737.2 1163.0L1697.4 1176.5L1663.3 1186.8L1646.2 1182.0L1650.2 1166.3L1643.9 1140.0L1637.7 1117.8ZM1731.6 788.4L1740.1 786.4L1742.9 769.5L1760.0 771.5L1788.4 761.2L1797.0 736.4L1797.0 714.1L1788.4 721.6L1782.8 740.0L1768.5 747.1L1748.6 757.7L1734.4 764.7ZM619.4 521.3L627.9 508.9L639.3 462.2L610.8 416.6L588.1 399.9L536.9 344.6L485.7 354.4L514.1 408.3L536.9 416.6L548.3 447.6L571.0 469.3L551.1 492.3L579.6 502.6L605.2 518.8ZM502.8 496.2L531.2 512.7L534.0 489.6L502.8 469.3ZM280.9 416.6L394.7 432.4L451.6 391.3L423.1 290.4L309.3 313.1Z" fill="#edddd3"/>
<g clip-path="url(#landclip)"><path d="M878.2 754.9L960.7 754.9L980.6 759.1L1009.1 747.9L1048.9 742.9L1057.4 742.9L1060.3 768.1L1105.8 774.9L1134.2 778.3L1162.7 783.0L1186.6 786.4L1190.5 798.2L1238.3 901.7L1287.8 905.2L1287.8 1222.7L1048.9 1222.7L878.2 945.5Z" fill="#fbf2ea"/><path d="M878.2 754.9L960.7 754.9L980.6 759.1L1009.1 747.9L1048.9 742.9L1057.4 742.9L1060.3 768.1L1105.8 774.9L1134.2 778.3L1162.7 783.0L1186.6 786.4L1190.5 798.2L1205.3 845.7L1211.6 869.9L1199.6 891.8L1185.4 919.7L1128.5 924.3L1120.0 911.0L1125.7 883.5L1128.5 860.9L1077.3 839.5L1060.3 836.4L1015.9 863.3L964.7 827.0L957.9 827.7L960.7 878.8L923.7 888.9L898.1 880.6L878.2 881.8Z" fill="#f9e8dc"/><path d="M1046.0 793.6L1050.0 770.2L1057.4 773.6L1078.5 779.0L1100.1 793.0L1105.8 781.7L1134.2 784.4L1134.2 845.7L1128.5 860.9L1077.3 839.5L1060.3 836.4L1048.9 827.0L1046.0 817.6Z" fill="#f5e0d4"/><path d="M1039.2 747.1L1057.4 743.6L1057.4 773.6L1050.0 770.2L1046.0 793.6L1034.7 771.5L1039.2 750.7Z" fill="#edddd3"/><path d="M942.5 809.9L892.4 809.9L892.4 853.0L918.0 849.9L923.7 836.4L942.5 820.7Z" fill="#fafaf8"/><path d="M1128.5 924.3L1148.4 919.7L1179.7 916.8L1185.4 925.5L1191.1 945.5L1182.6 952.9L1162.7 954.1L1148.4 945.5L1131.4 928.3Z" fill="#fafaf8"/><path d="M1236.6 908.1L1285.0 905.2L1285.0 916.8L1265.1 945.5L1230.9 979.7L1225.2 983.7L1225.2 951.2L1242.3 945.5L1264.5 928.3Z" fill="#fafaf8"/><path d="M1117.2 1048.6L1128.5 1037.0L1154.1 1022.5L1179.7 1028.3L1179.7 1054.4L1165.5 1063.3L1179.2 1072.2L1179.7 1098.1L1158.7 1103.6L1139.9 1078.1L1117.2 1066.2Z" fill="#f9e8dc"/><path d="M1185.4 948.4L1225.2 951.2L1225.2 983.7L1216.7 1000.2L1205.3 991.1L1185.4 979.7L1185.4 968.3Z" fill="#faede3"/><path d="M1048.9 1073.4L1058.6 1073.9L1108.6 1077.5L1124.6 1075.7L1134.2 1076.9L1139.9 1078.1L1158.7 1103.6L1170.1 1104.8L1174.0 1124.1L1179.2 1133.0L1248.0 1153.0L1248.0 1222.7L1048.9 1222.7Z" fill="#edddd3"/><path d="M1145.6 1149.8L1154.1 1143.9L1159.3 1149.1L1154.1 1156.3L1147.9 1155.0Z" fill="#fafaf8"/><path d="M1186.6 786.4L1213.9 780.3L1230.9 788.4L1246.3 800.2L1259.4 801.5L1268.5 795.6L1310.6 814.4L1333.3 845.7L1304.9 887.7L1236.6 905.2L1174.0 808.0Z" fill="#f9e8dc"/><path d="M1285.0 830.2L1312.9 827.7L1332.2 842.6L1324.8 854.8L1304.9 875.8L1287.8 863.9L1304.9 842.6Z" fill="#f5e0d4"/><path d="M1233.8 901.2L1289.0 883.5L1293.5 878.2L1287.8 863.9L1270.8 866.3L1256.5 874.1L1242.3 873.5L1236.6 877.6L1234.9 878.8L1235.5 890.6Z" fill="#faede3"/><path d="M1242.3 729.0L1265.1 736.4L1298.6 745.0L1339.0 750.0L1336.2 771.5L1341.9 785.7L1352.1 798.2L1342.4 825.8L1318.0 821.4L1312.3 813.7L1302.0 817.6L1285.5 809.3L1268.5 795.6L1263.4 788.4L1253.7 774.9L1250.8 764.7L1246.9 745.7Z" fill="#edddd3"/><path d="M1233.2 745.7L1246.9 745.7L1250.8 764.7L1253.7 774.9L1263.4 788.4L1268.5 795.6L1259.4 801.5L1246.3 800.2L1230.9 788.4L1213.9 780.3L1225.2 764.7L1227.0 750.7Z" fill="#f5e0d4"/><path d="M1196.8 748.6L1233.2 745.7L1227.0 750.7L1225.2 764.7L1213.9 780.3L1196.8 774.9L1195.7 757.7Z" fill="#faede3"/><path d="M1339.0 750.0L1367.5 744.3L1398.8 747.1L1415.8 747.1L1434.6 757.7L1441.4 778.3L1452.8 795.0L1492.6 811.2L1515.4 808.0L1543.8 808.0L1532.4 839.5L1515.4 851.8L1504.0 845.7L1486.9 851.8L1432.9 928.3L1401.6 857.8L1370.3 824.5L1342.4 825.8L1352.1 798.2L1341.9 785.7L1336.2 771.5Z" fill="#f9e8dc"/><path d="M1342.4 825.8L1370.3 824.5L1381.7 836.4L1395.9 830.2L1390.2 808.0L1415.8 781.7L1415.8 747.1L1398.8 747.1L1395.9 768.1L1387.4 774.9L1370.3 798.2L1352.1 798.2Z" fill="#faede3"/><path d="M1290.7 711.8L1307.7 715.6L1316.3 714.1L1324.8 704.9L1333.3 710.3L1341.9 716.3L1347.6 728.3L1370.3 740.0L1370.3 745.0L1358.9 754.2L1339.0 756.3L1333.3 745.7L1299.2 745.0L1298.6 734.2L1293.5 725.3L1292.4 714.1Z" fill="#fafaf8"/><path d="M1310.6 686.7L1324.8 682.7L1339.0 691.5L1344.7 698.6L1358.9 697.8L1367.5 702.5L1378.8 717.8L1395.9 710.3L1407.3 719.4L1395.9 723.8L1378.8 736.4L1376.0 745.0L1370.3 745.0L1370.3 740.0L1347.6 728.3L1341.9 716.3L1333.3 710.3L1324.8 704.9L1316.3 714.1L1310.6 715.6Z" fill="#faede3"/><path d="M1376.0 729.0L1395.9 723.8L1410.1 729.0L1418.7 736.4L1415.8 747.1L1398.8 747.1L1378.8 747.1L1378.8 736.4Z" fill="#fbf7f2"/><path d="M1395.9 710.3L1407.3 719.4L1395.9 723.8L1410.1 729.0L1424.4 721.6L1447.1 708.7L1430.0 702.5L1413.0 701.0Z" fill="#f9e8dc"/><path d="M1410.1 729.0L1418.7 721.6L1447.1 706.4L1458.5 682.7L1464.2 670.3L1486.9 653.3L1509.7 682.7L1538.1 702.5L1589.3 711.8L1626.3 698.6L1657.6 674.5L1671.8 670.3L1671.8 644.6L1714.5 644.6L1754.3 661.9L1737.2 702.5L1728.7 706.4L1703.1 725.3L1686.0 721.6L1669.0 732.7L1688.9 745.0L1671.8 764.7L1686.0 789.7L1673.0 821.4L1640.5 843.8L1606.4 848.7L1595.0 840.7L1569.4 849.9L1552.4 833.3L1549.5 808.0L1515.4 808.0L1492.6 811.2L1452.8 795.0L1441.4 778.3L1434.6 757.7L1415.8 747.1Z" fill="#fafaf8"/><path d="M1491.5 651.6L1515.4 639.2L1549.5 626.5L1595.0 641.9L1640.5 642.8L1654.8 646.3L1671.8 670.3L1657.6 674.5L1626.3 698.6L1589.3 711.8L1538.1 702.5L1509.7 682.7Z" fill="#f5e0d4"/><path d="M1515.4 808.0L1543.8 808.0L1552.4 833.3L1569.4 849.9L1595.0 840.7L1606.4 848.7L1617.8 887.7L1612.1 916.8L1560.9 945.5L1549.5 916.8L1543.8 881.8L1515.4 851.8Z" fill="#fbf2ea"/><path d="M1532.4 1037.0L1794.1 1037.0L1794.1 934.1L1532.4 934.1Z" fill="#f5e0d4"/><path d="M574.4 906.4L650.7 911.0L647.8 925.5L645.0 945.5L627.9 951.2L627.9 968.3L610.8 968.3L605.2 939.8L579.6 934.1L574.4 922.6Z" fill="#f9e8dc"/><path d="M568.2 857.2L584.7 857.2L584.7 870.5L568.2 869.9Z" fill="#fbf7f2"/><path d="M493.1 898.8L519.8 887.7L519.8 911.0L504.5 911.0Z" fill="#fbf7f2"/></g>
<path d="M704.0 421.6L693.0 432.5L688.6 452.3L693.0 476.4L704.0 498.3L717.0 524.6L732.5 540.0L743.4 546.6L752.0 531.0L761.0 498.3L769.7 476.4L789.5 465.4L807.0 439.0L829.0 428.2L853.0 421.6L870.0 400.0L870.0 300.0L690.0 300.0L680.0 400.0Z" fill="#fafaf8"/>
<path d="M100.0 386.0L189.9 414.9L218.3 424.6L263.8 405.0L326.4 426.2L377.6 435.5L434.5 440.1L457.2 416.6L480.0 432.4L508.4 416.6L525.5 416.6L505.6 462.2L501.6 462.2L480.0 496.2L476.0 505.2L456.1 533.2L456.1 558.2L468.6 577.4L497.1 592.8L523.8 618.1L542.6 631.1L543.7 597.8L554.0 566.8L548.3 539.0L551.1 518.8L576.7 521.3L593.8 533.2L596.6 558.2L616.5 558.2L625.1 541.3L642.1 582.6L664.9 607.6L675.1 624.6L667.7 632.9L650.7 642.8L616.5 642.8L596.6 663.6L622.2 651.6L625.1 657.6L623.4 670.3L645.0 681.9L650.7 677.0L650.7 682.7L619.4 698.6L616.5 686.7L610.8 688.3L593.8 697.1L590.4 705.6L593.8 712.5L582.4 717.8L571.0 721.6L570.5 729.0L562.5 736.4L559.6 747.1L562.5 759.1L551.1 766.0L542.6 772.9L531.8 781.7L528.9 791.7L534.0 808.0L536.9 817.6L534.6 825.8L528.4 822.0L522.1 811.2L521.0 800.2L514.1 794.3L502.8 792.3L488.5 793.0L482.8 798.2L484.6 801.5L477.2 800.8L462.9 796.9L453.3 799.5L440.2 809.3L438.5 820.7L435.6 843.8L440.2 857.8L445.9 865.1L454.4 868.7L468.6 866.3L475.4 860.9L477.7 851.8L491.4 848.1L497.1 849.3L494.2 860.9L490.2 869.9L489.7 881.8L502.8 882.4L514.1 884.7L517.5 888.9L517.0 902.3L515.3 911.0L522.7 919.7L531.2 923.2L539.7 919.7L548.3 921.4L552.2 924.9L548.8 932.4L548.3 931.2L536.9 931.8L528.4 929.5L517.0 925.5L504.5 916.8L503.9 909.9L494.2 899.4L482.8 896.5L471.5 893.6L462.9 884.7L453.3 880.6L443.0 883.5L431.6 880.0L417.4 874.6L403.2 868.1L391.8 857.8L393.0 848.7L389.0 840.7L377.6 827.0L363.4 811.2L352.0 798.2L339.5 785.0L343.5 801.5L354.8 817.6L366.2 833.3L369.1 839.5L363.4 836.4L354.8 828.3L343.5 811.2L337.8 808.0L328.7 785.0L325.8 778.3L317.9 768.1L305.9 764.0L299.1 752.1L295.1 741.4L287.7 726.8L284.9 710.3L286.6 677.0L282.6 658.5L280.9 644.6L266.7 635.6L263.8 621.8L249.6 602.7L243.9 592.8L232.5 577.4L224.0 563.6L212.6 561.4L196.7 547.0L178.5 544.7L158.6 533.2L138.7 530.8L130.1 550.4L115.9 561.4L98.8 577.4L76.1 592.8L59.0 600.7L93.2 569.0L93.2 555.9L70.4 544.7L56.2 539.0L50.5 521.3L56.2 506.4L76.1 489.6L53.3 488.3L36.3 474.8L70.4 462.2L61.9 452.1L44.8 435.5L70.4 411.7L93.2 393.0ZM552.2 924.9L559.6 919.7L562.5 913.9L571.0 909.3L582.4 902.9L588.1 908.1L585.2 913.9L593.8 908.1L605.2 913.9L622.2 916.2L639.3 912.8L645.0 922.6L662.0 934.1L679.1 940.4L693.3 945.5L701.9 951.2L707.6 963.8L713.2 974.0L716.1 979.7L738.8 988.2L758.8 991.1L773.0 995.1L791.2 1003.6L794.0 1016.8L790.0 1028.3L778.7 1039.9L771.3 1048.6L770.1 1075.1L765.6 1087.1L758.8 1102.3L747.4 1108.5L733.2 1113.5L716.1 1127.3L715.0 1143.3L704.7 1159.6L693.3 1176.5L687.6 1183.3L679.1 1186.8L670.6 1185.4L659.2 1179.9L664.9 1193.8L664.9 1208.0L639.3 1215.3L636.4 1230.2L622.2 1230.2L625.1 1241.6L619.4 1261.3L608.0 1273.5L616.5 1286.1L602.3 1307.9L599.5 1321.5L602.3 1330.9L593.8 1350.2L576.7 1330.9L565.3 1303.4L568.2 1269.4L573.9 1237.7L573.9 1200.9L585.2 1173.1L585.2 1140.0L590.9 1108.5L592.6 1081.1L582.4 1072.2L559.6 1054.4L548.3 1031.2L539.7 1013.9L529.5 1001.3L536.9 988.2L534.0 979.7L536.9 968.3L543.7 962.6L551.1 951.2L551.7 936.9L548.8 932.4ZM960.1 754.2L956.2 748.6L949.9 745.7L941.4 747.1L941.9 736.4L938.0 734.2L941.4 723.8L941.9 710.3L939.1 702.5L946.5 697.1L959.0 697.8L970.4 698.6L981.8 699.4L985.2 689.9L985.2 677.0L979.5 668.7L966.4 662.8L964.7 658.5L973.8 655.1L982.9 655.9L981.2 647.2L985.7 649.8L993.1 649.0L1001.1 642.8L1002.8 635.6L1010.2 632.0L1017.6 624.6L1019.9 615.2L1031.8 612.4L1040.4 610.5L1041.5 597.8L1038.1 591.8L1038.6 579.5L1052.3 570.0L1051.7 577.4L1050.0 585.7L1054.0 583.6L1047.8 594.8L1050.0 601.7L1054.6 607.6L1063.1 603.7L1072.8 608.5L1085.9 602.7L1097.8 599.8L1103.5 603.7L1112.6 595.8L1111.5 580.5L1114.9 572.2L1120.6 570.0L1129.1 577.4L1130.8 563.6L1125.7 557.1L1125.7 552.6L1133.1 550.4L1151.3 550.4L1161.5 545.9L1155.8 540.2L1142.8 540.2L1134.2 542.5L1122.3 545.9L1113.7 535.5L1114.3 524.9L1114.3 507.7L1123.4 496.2L1136.5 483.0L1131.9 472.0L1118.3 473.4L1113.2 484.3L1105.8 498.8L1097.2 508.9L1090.4 524.9L1089.8 536.7L1099.0 544.7L1095.5 552.6L1087.0 566.8L1085.3 581.6L1075.6 586.7L1064.8 593.8L1065.4 581.6L1059.7 570.0L1055.7 554.8L1052.3 545.9L1048.9 555.9L1037.5 565.8L1029.5 565.8L1023.9 557.1L1021.6 540.2L1020.4 526.1L1027.3 515.2L1040.4 503.9L1051.2 496.2L1060.3 480.3L1066.0 462.2L1074.5 443.1L1083.0 432.4L1097.2 411.7L1117.2 403.3L1138.8 389.5L1151.3 391.3L1168.4 403.3L1179.7 418.2L1199.6 423.0L1222.4 443.1L1226.4 457.9L1211.6 467.9L1191.1 463.6L1179.7 457.9L1176.9 453.5L1190.0 488.3L1199.6 494.9L1208.2 489.6L1222.4 489.6L1219.6 476.2L1236.6 465.0L1243.4 470.6L1242.3 453.5L1239.5 432.4L1253.7 437.1L1267.9 444.6L1293.5 437.1L1322.0 427.8L1333.3 424.6L1370.3 419.8L1381.7 432.4L1384.5 354.4L1404.4 358.3L1404.4 391.3L1401.6 447.6L1400.5 460.8L1407.3 457.9L1415.8 440.1L1415.8 408.3L1410.1 382.4L1430.0 364.0L1435.7 391.3L1430.0 411.7L1432.9 432.4L1441.4 424.6L1447.1 354.4L1560.9 266.0L1634.8 344.6L1731.6 391.3L1845.3 373.4L1902.2 408.3L1959.1 408.3L2016.0 424.6L2016.0 483.0L2004.6 515.2L1930.7 544.7L1919.3 587.7L1882.3 635.6L1879.5 572.2L1873.8 552.6L1834.0 552.6L1794.1 555.9L1760.0 602.7L1791.3 617.1L1795.8 661.9L1788.4 670.3L1760.0 700.2L1742.4 701.8L1735.5 708.0L1729.8 719.4L1723.0 736.4L1728.7 750.7L1727.0 759.8L1717.3 764.7L1710.5 764.0L1711.6 747.1L1704.2 741.4L1701.4 726.8L1683.2 732.7L1680.4 720.1L1666.1 732.0L1669.0 743.6L1688.9 745.0L1677.5 754.2L1671.3 763.3L1679.2 778.3L1685.5 788.4L1683.2 804.7L1673.0 821.4L1660.4 835.8L1641.7 843.8L1623.5 849.9L1618.9 856.0L1611.0 848.1L1599.0 854.8L1593.9 863.9L1597.9 872.9L1608.1 884.7L1613.8 899.4L1613.2 908.1L1600.7 915.1L1589.3 924.3L1589.3 915.7L1580.2 913.4L1574.0 904.1L1566.0 897.1L1560.9 902.3L1556.3 916.8L1562.6 926.6L1563.7 934.1L1569.4 935.2L1575.7 939.8L1580.2 948.4L1580.2 958.1L1585.4 966.0L1580.8 966.6L1568.3 958.1L1563.2 948.4L1563.2 938.1L1559.8 935.2L1551.2 928.3L1552.9 913.9L1550.6 896.5L1547.2 878.8L1539.3 877.0L1533.6 883.0L1528.5 880.6L1527.9 865.1L1520.5 856.0L1516.5 848.7L1514.8 842.0L1506.8 845.7L1498.3 847.5L1486.4 854.2L1475.6 862.1L1460.2 878.2L1448.8 884.7L1448.8 899.4L1446.0 915.1L1436.9 923.2L1432.9 927.8L1426.1 917.4L1418.7 901.2L1413.0 886.5L1406.7 863.9L1405.6 851.8L1404.4 843.8L1390.2 853.0L1384.5 843.8L1391.4 840.1L1381.7 836.4L1373.2 828.3L1370.3 824.5L1344.7 825.8L1326.5 823.9L1318.0 821.4L1312.3 813.7L1302.0 817.6L1285.5 809.3L1277.6 800.2L1268.5 795.6L1265.1 800.2L1269.6 811.2L1277.0 819.5L1279.9 827.0L1285.0 821.4L1285.5 831.4L1301.5 831.4L1306.6 825.2L1311.1 819.5L1312.9 827.7L1320.8 834.5L1332.2 842.6L1324.8 854.8L1320.8 863.9L1313.4 869.9L1304.9 875.8L1289.0 883.5L1270.8 890.0L1248.0 899.4L1239.5 901.2L1235.5 890.6L1234.9 878.8L1226.4 865.1L1215.0 848.7L1203.6 828.3L1192.8 808.0L1190.5 798.2L1186.6 786.4L1190.5 776.3L1194.0 768.8L1195.7 757.7L1196.8 748.6L1188.8 748.6L1176.9 753.5L1166.1 748.6L1154.1 749.3L1147.3 740.7L1144.5 729.0L1141.0 725.3L1148.4 722.4L1157.0 717.8L1171.2 716.3L1191.1 710.3L1205.3 717.8L1222.4 717.8L1228.7 713.3L1229.2 706.4L1218.4 699.4L1205.3 689.1L1200.2 684.3L1194.0 685.9L1182.6 690.7L1176.9 683.5L1183.7 678.6L1171.2 673.7L1163.8 680.2L1160.4 685.1L1154.7 694.7L1150.7 704.9L1151.3 714.1L1156.4 716.0L1141.6 720.9L1128.5 720.1L1122.3 720.9L1128.0 731.2L1122.3 740.7L1123.4 750.7L1114.9 748.6L1112.0 740.7L1114.3 736.4L1107.5 729.8L1102.4 722.4L1102.9 712.5L1097.2 707.2L1083.0 698.6L1075.1 686.7L1069.9 681.9L1062.0 683.5L1062.5 693.1L1069.4 697.8L1076.2 710.3L1083.6 714.8L1097.2 724.6L1088.7 721.6L1085.9 729.0L1089.3 733.4L1080.7 740.7L1082.5 734.2L1081.3 725.3L1073.4 719.4L1063.1 712.5L1051.7 703.3L1049.5 694.7L1042.1 691.5L1034.7 696.3L1022.2 700.2L1014.8 698.6L1009.1 705.6L1010.2 711.0L1004.5 714.8L997.1 717.8L990.3 729.0L993.1 734.9L988.0 742.9L980.1 749.3L967.0 749.3ZM958.4 755.6L953.3 768.1L948.8 770.8L939.1 778.3L936.2 788.4L937.4 792.3L929.4 803.4L918.0 809.9L909.5 820.1L901.0 834.5L895.3 851.8L899.3 860.9L901.0 869.9L898.1 881.8L892.4 889.4L897.0 899.4L896.4 903.5L903.8 908.1L909.5 913.9L915.2 919.7L916.9 926.0L926.6 934.7L938.0 943.8L949.3 948.9L963.6 944.9L980.6 946.7L992.0 942.1L1000.5 938.7L1006.2 937.5L1017.6 938.1L1025.0 949.5L1031.8 948.9L1040.4 947.8L1046.0 952.4L1047.8 959.8L1046.0 968.3L1044.9 976.8L1048.9 988.2L1057.4 995.1L1061.4 1008.2L1067.1 1024.3L1069.4 1039.9L1063.1 1051.5L1059.1 1071.0L1063.1 1081.1L1074.5 1106.7L1078.5 1131.1L1085.9 1143.9L1093.3 1163.0L1096.7 1179.2L1097.2 1182.6L1105.8 1185.4L1117.2 1180.6L1137.6 1179.9L1150.7 1173.1L1162.7 1161.6L1168.4 1151.7L1179.2 1127.3L1192.8 1114.7L1194.0 1102.3L1190.0 1090.2L1199.6 1082.9L1207.6 1073.9L1222.4 1062.1L1222.4 1034.1L1215.6 1019.7L1213.9 1008.2L1217.8 996.8L1228.1 983.7L1233.8 976.8L1249.7 962.6L1265.1 945.5L1282.1 914.5L1283.8 906.4L1273.6 909.3L1248.0 914.5L1238.3 908.1L1233.8 902.3L1237.8 901.2L1225.2 888.9L1216.7 884.7L1211.0 869.9L1204.2 860.9L1203.6 851.8L1194.0 833.9L1185.4 817.6L1179.7 806.0L1177.5 795.6L1182.6 804.7L1187.1 809.3L1190.5 798.2L1186.6 786.4L1175.8 786.4L1162.1 787.0L1145.6 785.0L1134.2 784.4L1122.8 778.3L1114.3 775.6L1105.8 781.7L1104.6 788.4L1100.1 793.0L1088.7 788.4L1080.2 783.0L1078.5 779.0L1067.1 775.6L1057.4 773.6L1050.0 770.2L1054.0 761.2L1055.1 747.9L1050.0 745.7L1047.8 745.0L1040.4 747.9L1020.4 748.6L1009.1 748.6L997.7 750.7L988.6 756.3L980.6 760.5L961.8 754.9ZM959.6 643.7L968.1 641.0L974.9 638.3L983.5 639.2L997.7 636.5L1000.0 632.9L996.0 631.1L1001.7 621.8L994.3 618.1L993.1 612.4L984.6 601.7L982.9 591.8L979.5 587.7L973.8 587.7L977.8 582.6L981.8 572.2L972.1 570.0L974.9 560.3L963.6 560.3L960.1 569.0L959.0 579.5L956.7 584.7L960.7 592.8L964.1 590.8L963.0 598.8L972.1 598.8L972.7 604.7L975.5 613.3L965.8 614.3L965.3 619.0L968.7 623.7L961.8 628.3L969.2 630.2L974.9 631.1L972.1 633.8L965.8 635.6ZM957.9 624.6L957.3 614.3L960.7 602.7L957.9 595.8L950.5 594.8L944.8 595.8L943.1 604.7L935.1 605.6L935.7 613.3L939.1 620.9L932.8 625.6L936.2 631.1L945.4 628.3L955.6 624.6ZM855.5 476.2L866.8 463.6L889.6 466.4L909.5 465.0L915.2 481.6L906.7 492.3L886.8 503.9L864.0 498.8L866.8 492.3L855.5 484.3ZM654.1 665.3L659.2 653.3L663.2 640.1L676.3 630.2L676.3 644.6L687.6 650.7L692.2 665.3L687.6 673.7L676.3 670.3L671.7 665.3ZM509.0 846.3L525.5 841.3L534.0 838.9L551.1 846.9L562.5 851.2L569.9 856.6L551.1 858.4L545.4 848.7L528.4 847.5L517.0 846.9ZM568.7 866.9L577.8 858.4L593.8 859.7L602.9 866.3L588.1 869.9L579.6 868.7ZM546.6 868.1L558.5 869.9L554.0 871.7ZM609.7 866.9L618.8 868.1L613.7 870.5ZM1062.5 739.2L1080.7 737.8L1077.9 747.1L1073.4 747.1L1063.7 742.9ZM1038.6 717.1L1047.8 717.8L1046.6 732.0L1039.8 732.7L1039.8 722.4ZM1040.9 703.3L1045.5 702.5L1046.0 710.3L1043.8 714.8L1040.9 711.0ZM1125.7 757.0L1141.6 759.1L1133.7 761.9L1126.3 759.8ZM1175.8 760.5L1188.8 756.3L1184.9 761.9L1177.5 763.3ZM1005.7 728.3L1011.3 726.8L1010.2 730.5L1006.8 729.8ZM1272.5 1042.8L1279.3 1063.3L1275.3 1075.1L1266.8 1099.3L1259.4 1121.0L1249.1 1124.1L1242.3 1117.8L1238.3 1102.3L1244.6 1090.2L1242.3 1072.2L1256.5 1065.0L1265.1 1051.5ZM1446.5 918.0L1457.9 931.2L1453.9 938.7L1447.1 936.9L1445.4 928.3ZM1534.2 942.1L1546.7 944.4L1562.6 959.8L1581.9 979.7L1595.0 991.1L1593.9 1007.1L1586.5 1007.6L1574.0 996.8L1562.6 979.7L1552.4 964.3ZM1590.5 1012.8L1595.0 1008.2L1608.1 1009.9L1623.5 1010.5L1632.6 1013.3L1642.8 1017.9L1643.4 1023.7L1623.5 1021.4L1606.4 1018.5L1592.2 1013.3ZM1612.1 965.5L1615.5 962.6L1623.5 965.5L1634.8 955.8L1648.5 945.5L1657.6 934.1L1670.7 943.8L1663.3 948.4L1662.2 968.3L1669.0 969.4L1660.4 976.8L1654.8 988.2L1651.9 996.8L1643.4 995.1L1626.3 991.1L1618.9 990.5L1612.1 976.8ZM1671.8 1005.3L1677.5 1005.9L1677.5 989.9L1683.2 999.6L1692.9 1000.8L1686.0 989.9L1693.4 979.1L1680.4 979.1L1680.4 966.6L1704.2 965.5L1674.7 971.2L1671.8 982.5ZM1646.2 1020.8L1657.6 1022.5L1669.0 1022.0L1686.0 1020.8L1703.1 1019.7L1715.6 1022.0L1703.1 1027.1L1694.6 1032.9L1683.2 1024.8L1669.0 1024.8L1654.8 1024.8ZM1737.2 980.8L1754.3 978.6L1777.1 982.5L1794.1 988.8L1828.3 1008.2L1845.3 1034.1L1805.5 1025.4L1794.1 1026.6L1777.1 1021.4L1771.4 1002.5L1748.6 996.8L1742.9 988.2ZM1674.7 866.9L1687.8 866.9L1686.0 875.8L1683.2 884.7L1697.4 896.5L1686.0 896.5L1678.1 891.8L1674.7 881.8ZM1686.0 934.1L1706.0 918.0L1712.2 932.9L1706.0 940.9L1697.4 938.1ZM1686.0 913.9L1697.4 902.3L1706.0 911.0L1697.4 918.0L1691.7 922.6ZM1675.2 839.5L1680.4 825.8L1686.0 827.0L1679.8 845.7ZM1609.8 862.7L1620.6 857.2L1623.5 860.3L1614.9 868.7ZM1637.7 1102.3L1641.7 1101.1L1656.5 1093.8L1674.7 1089.0L1687.2 1078.1L1694.6 1072.2L1703.1 1060.3L1714.5 1054.4L1728.7 1059.7L1734.4 1045.7L1745.8 1039.9L1771.4 1042.8L1765.7 1060.3L1788.4 1076.3L1799.8 1035.8L1822.6 1081.1L1865.2 1140.0L1845.3 1204.4L1825.4 1215.3L1794.1 1210.2L1777.1 1190.3L1762.8 1185.4L1737.2 1163.0L1697.4 1176.5L1663.3 1186.8L1646.2 1182.0L1650.2 1166.3L1643.9 1140.0L1637.7 1117.8ZM1731.6 788.4L1740.1 786.4L1742.9 769.5L1760.0 771.5L1788.4 761.2L1797.0 736.4L1797.0 714.1L1788.4 721.6L1782.8 740.0L1768.5 747.1L1748.6 757.7L1734.4 764.7ZM619.4 521.3L627.9 508.9L639.3 462.2L610.8 416.6L588.1 399.9L536.9 344.6L485.7 354.4L514.1 408.3L536.9 416.6L548.3 447.6L571.0 469.3L551.1 492.3L579.6 502.6L605.2 518.8ZM502.8 496.2L531.2 512.7L534.0 489.6L502.8 469.3ZM280.9 416.6L394.7 432.4L451.6 391.3L423.1 290.4L309.3 313.1Z" fill="none" stroke="#e6d9d2" stroke-width="1"/>
<path d="M1262.2 681.9L1271.9 674.5L1287.8 671.2L1294.6 674.5L1293.5 684.3L1283.8 685.1L1282.1 690.7L1292.4 706.4L1291.8 714.1L1293.5 725.3L1298.6 732.7L1298.6 745.0L1285.0 748.6L1276.4 744.3L1270.8 736.4L1273.6 723.1L1267.9 711.8L1262.2 702.5L1260.5 693.1ZM1191.1 683.5L1200.2 683.5L1209.9 672.0L1215.6 668.7L1205.3 669.5L1191.1 676.1ZM468.6 672.8L491.4 655.1L509.6 671.2L499.9 675.3L480.0 673.7ZM492.5 710.3L499.9 708.7L505.6 682.7L494.2 680.2L491.9 694.7ZM511.3 680.2L525.5 680.2L528.4 690.7L522.7 702.5L517.0 694.7L517.5 686.7ZM517.5 712.5L542.6 704.1L539.7 707.2L525.5 714.8ZM538.0 700.2L558.5 698.6L556.8 693.1L539.7 697.1ZM434.5 640.1L443.0 640.1L437.3 609.5L428.8 617.1ZM1157.5 992.8L1160.4 992.8L1168.4 1013.9L1169.5 1023.1L1165.5 1023.1L1158.7 1009.3ZM1185.4 1028.3L1188.8 1028.9L1191.1 1042.8L1192.2 1056.2L1188.3 1054.4L1185.4 1039.9ZM1410.1 675.3L1421.5 673.7L1442.6 673.7L1441.4 678.6L1418.7 680.2L1413.0 685.1ZM1323.1 674.5L1330.5 680.2L1332.2 688.3L1326.5 696.3L1323.1 690.7Z" fill="#d4dadc"/>
<path d="M1582.5 630.2L1586.5 631.1L1597.9 621.8L1611.0 611.4L1617.2 590.8L1614.4 589.8L1604.1 610.5L1592.2 620.9ZM1172.9 975.7L1180.9 972.3L1186.0 975.7L1182.6 987.7L1174.0 989.9L1171.8 982.0ZM1162.7 535.5L1171.2 543.6L1178.6 535.5L1172.9 526.1L1164.4 529.6ZM1188.3 533.2L1195.7 530.8L1198.5 513.9L1191.1 511.4L1188.3 521.3Z" fill="#cdc9c7"/>
<g font-family="Liberation Sans"><text x="394.5" y="661" font-size="27.6" font-weight="bold" fill="#7f7f7f" stroke="#fff" stroke-opacity="0.6" stroke-width="2.5" paint-order="stroke" textLength="104.7" lengthAdjust="spacing">NORTH</text><text x="376" y="695.3" font-size="28.1" font-weight="bold" fill="#7f7f7f" stroke="#fff" stroke-opacity="0.6" stroke-width="2.5" paint-order="stroke" textLength="139.8" lengthAdjust="spacing">AMERICA</text><text x="596.4" y="1047.6" font-size="25.7" font-weight="bold" fill="#7f7f7f" stroke="#fff" stroke-opacity="0.6" stroke-width="2.5" paint-order="stroke" textLength="101.4" lengthAdjust="spacing">SOUTH</text><text x="580.3" y="1081.4" font-size="25.7" font-weight="bold" fill="#7f7f7f" stroke="#fff" stroke-opacity="0.6" stroke-width="2.5" paint-order="stroke" textLength="135.9" lengthAdjust="spacing">AMERICA</text><text x="1097.7" y="933" font-size="26.2" font-weight="bold" fill="#7f7f7f" stroke="#fff" stroke-opacity="0.6" stroke-width="2.5" paint-order="stroke" textLength="108.3" lengthAdjust="spacing">AFRICA</text><text x="1362.5" y="726.7" font-size="27.6" font-weight="bold" fill="#7f7f7f" stroke="#fff" stroke-opacity="0.6" stroke-width="2.5" paint-order="stroke" textLength="68.0" lengthAdjust="spacing">ASIA</text><text x="1341" y="1028" font-size="23.3" font-weight="bold" fill="#a3abb3" stroke="#fff" stroke-opacity="0.6" stroke-width="2.5" paint-order="stroke" font-style="italic" textLength="69.0" lengthAdjust="spacingAndGlyphs">Indian</text><text x="1341" y="1060" font-size="23.3" font-weight="bold" fill="#a3abb3" stroke="#fff" stroke-opacity="0.6" stroke-width="2.5" paint-order="stroke" font-style="italic" textLength="69.0" lengthAdjust="spacingAndGlyphs">Ocean</text></g>
<g fill="rgba(190,100,70,0.12)" stroke="rgba(165,72,22,0.52)" stroke-width="1.8"><circle cx="948" cy="619.7" r="6.1"/><circle cx="982" cy="609.9" r="12"/><circle cx="1025.8" cy="623.5" r="7.9"/><circle cx="1015.9" cy="639.8" r="9.9"/><circle cx="1029.7" cy="648" r="5.8"/><circle cx="1045.8" cy="637.8" r="14"/><circle cx="1107.8" cy="627.6" r="12"/><circle cx="1081.7" cy="647.7" r="9.9"/><circle cx="1103.9" cy="657.6" r="7.9"/><circle cx="1107.5" cy="671.9" r="5.8"/><circle cx="1070" cy="669.4" r="13.2"/><circle cx="1039.7" cy="671.9" r="7.9"/><circle cx="1048" cy="670" r="4.1"/><circle cx="1079.9" cy="679.3" r="7.9"/><circle cx="1081.7" cy="688" r="5.8"/><circle cx="1005.9" cy="679.8" r="14"/><circle cx="1036" cy="697.9" r="2.5"/><circle cx="1003.9" cy="708" r="4.1"/><circle cx="972.1" cy="727.5" r="10.2"/><circle cx="948" cy="731.6" r="8.2"/><circle cx="1068" cy="705.6" r="12"/><circle cx="1063.9" cy="697.9" r="3.6"/><circle cx="1114" cy="695.4" r="9.9"/><circle cx="1095.7" cy="695.4" r="4.1"/><circle cx="1101.7" cy="711.5" r="5.8"/><circle cx="1111.6" cy="707.7" r="6.1"/><circle cx="1107.8" cy="719.6" r="4.1"/><circle cx="1135.8" cy="679.8" r="9.9"/><circle cx="1158" cy="671.9" r="7.9"/><circle cx="1175.8" cy="655.6" r="9.9"/><circle cx="1135.5" cy="703.6" r="6.1"/><circle cx="1075.8" cy="757.6" r="4.1"/><circle cx="1046" cy="769.6" r="6.1"/><circle cx="1181.6" cy="763.8" r="7.9"/><circle cx="1197.8" cy="771.4" r="5.8"/><circle cx="1192" cy="787.7" r="7.9"/><circle cx="1049.7" cy="523.7" r="6.4"/><circle cx="1079.9" cy="523.7" r="6.4"/><circle cx="1141.9" cy="497.8" r="6.4"/><circle cx="1141.9" cy="557.8" r="6.4"/><circle cx="1135.9" cy="579.5" r="6.4"/><circle cx="1129.8" cy="590" r="8.1"/><circle cx="1049.7" cy="589.7" r="6.4"/><circle cx="892" cy="484" r="5"/><circle cx="1561.4" cy="545.5" r="16.2"/><circle cx="1241.8" cy="711.6" r="7.9"/><circle cx="1249.5" cy="727.7" r="5.8"/><circle cx="1263.5" cy="723.6" r="5.8"/><circle cx="1249.8" cy="829.7" r="5.8"/><circle cx="1266" cy="801.7" r="5.8"/><circle cx="1295.9" cy="784" r="7.9"/><circle cx="1281.6" cy="821.4" r="7.9"/><circle cx="1285.7" cy="825.6" r="5.8"/><circle cx="1301.6" cy="835.4" r="5.8"/><circle cx="1358" cy="719.5" r="5.8"/><circle cx="1419.7" cy="719.5" r="4"/><circle cx="1363.8" cy="775.7" r="4.1"/><circle cx="1391.8" cy="796" r="5.8"/><circle cx="1431.7" cy="859.6" r="8.2"/><circle cx="1409.8" cy="957.8" r="2.2"/><circle cx="1583.7" cy="966.7" r="9.3"/><circle cx="1633.9" cy="961.5" r="8.4"/><circle cx="1645.6" cy="950" r="6"/><circle cx="1719" cy="751.8" r="15"/><circle cx="1708" cy="1023.8" r="3"/><circle cx="1687.5" cy="901.5" r="6"/><circle cx="965.8" cy="784" r="4.2"/><circle cx="1011.9" cy="810" r="4.2"/><circle cx="1089.8" cy="829.8" r="4.2"/><circle cx="1163.8" cy="815.8" r="4.2"/><circle cx="971.7" cy="877.7" r="4.2"/><circle cx="899.8" cy="898" r="4.2"/><circle cx="913.8" cy="895.8" r="2.1"/><circle cx="1101.9" cy="889.8" r="2.1"/><circle cx="1163.8" cy="889.8" r="4.2"/><circle cx="965.8" cy="929.8" r="4.2"/><circle cx="981.7" cy="929.8" r="4.2"/><circle cx="999.8" cy="929.8" r="4.2"/><circle cx="1006" cy="921.5" r="2.1"/><circle cx="1210.2" cy="929.8" r="4.2"/><circle cx="1080" cy="981.9" r="4"/><circle cx="1176" cy="970" r="4"/><circle cx="1209.8" cy="970" r="4"/><circle cx="1163.7" cy="987.7" r="4"/><circle cx="1194" cy="1010" r="4"/><circle cx="1100" cy="1047.7" r="4"/><circle cx="1246" cy="1046" r="2.1"/><circle cx="1187.9" cy="1053.9" r="2.1"/><circle cx="1163.7" cy="1061.8" r="4"/><circle cx="1194" cy="1081.4" r="4"/><circle cx="1163.7" cy="1091.6" r="4"/><circle cx="1261.9" cy="1091.6" r="4"/><circle cx="1321.6" cy="1093.7" r="5.6"/><circle cx="1129.8" cy="1103.9" r="4"/><circle cx="1173.7" cy="1131.9" r="4"/><circle cx="1129.8" cy="1147.7" r="7.9"/><circle cx="452.7" cy="545.7" r="10"/><circle cx="442" cy="741.8" r="18.3"/><circle cx="414.4" cy="840.5" r="11.6"/><circle cx="479" cy="885.7" r="8"/><circle cx="502" cy="889.9" r="4.6"/><circle cx="510" cy="901.8" r="4.6"/><circle cx="515.9" cy="917.5" r="10.4"/><circle cx="537.7" cy="923.9" r="5.8"/><circle cx="537.7" cy="849.6" r="4.1"/><circle cx="553.8" cy="869.6" r="5.8"/><circle cx="582" cy="865.7" r="4.1"/><circle cx="591.8" cy="865.7" r="4.1"/><circle cx="637.9" cy="875.6" r="2.3"/><circle cx="655.8" cy="899.5" r="4.1"/><circle cx="645.9" cy="913.4" r="5.8"/><circle cx="617.6" cy="929.5" r="5.8"/><circle cx="583.8" cy="953.9" r="5.8"/><circle cx="657.9" cy="947.9" r="2.3"/><circle cx="561.9" cy="1033.8" r="8"/><circle cx="681.6" cy="1033.8" r="11.5"/><circle cx="624" cy="1074" r="5.8"/><circle cx="663.9" cy="1109.8" r="4.2"/><circle cx="589.8" cy="1155.5" r="12"/><circle cx="629.8" cy="1181.7" r="6.3"/></g>
</svg>
  <div class="abs" style="left:-112px;top:-420px;width:1824px;height:1444px"></div>
  <div class="abs" style="left:20px;top:-40px;width:68px;height:60px;border-radius:8px;border:4px solid rgba(0,0,0,0.2);background:#fff;background-clip:padding-box"></div>
 </div>
 <div class="abs" style="left:0;top:105px;width:1600px;height:240px;background:#303e4f">
   <div class="abs" style="left:30px;top:120px;width:293px;height:120px;background:#1d2630"></div>
   <div class="abs" style="left:0;top:0;width:1600px;height:1.5px;background:#1a232d"></div>
 </div>
 <div class="abs" style="left:-112px;top:-75px;width:1824px;height:1444px;pointer-events:none"><div class="t" style="left:142.7px;top:218.0px;font-size:40.70px;line-height:40.70px;color:#fff;transform:scaleX(0.8605);transform-origin:0 0;-webkit-text-stroke:0.9px #303e4f;">COVID-19 tracker</div><div class="t" style="left:172.6px;top:345.0px;font-size:30.81px;line-height:30.81px;color:#fff;transform:scaleX(0.9108);transform-origin:0 0;-webkit-text-stroke:0.8px #1d2630;">COVID-19 mapper</div><div class="t" style="left:465.3px;top:345.0px;font-size:30.81px;line-height:30.81px;color:#fff;transform:scaleX(0.9013);transform-origin:0 0;-webkit-text-stroke:0.8px #303e4f;">Region plots</div><div class="t" style="left:681.2px;top:345.0px;font-size:30.81px;line-height:30.81px;color:#fff;transform:scaleX(0.9129);transform-origin:0 0;-webkit-text-stroke:0.8px #303e4f;">SARS mapper</div><div class="t" style="left:919.4px;top:345.0px;font-size:30.81px;line-height:30.81px;color:#fff;transform:scaleX(0.9177);transform-origin:0 0;-webkit-text-stroke:0.8px #303e4f;">Outbreak comparisons</div><div class="t" style="left:1264.6px;top:345.0px;font-size:30.81px;line-height:30.81px;color:#fff;transform:scaleX(0.8711);transform-origin:0 0;-webkit-text-stroke:0.8px #303e4f;">Data</div><div class="t" style="left:1381.0px;top:345.0px;font-size:30.81px;line-height:30.81px;color:#fff;transform:scaleX(0.9093);transform-origin:0 0;-webkit-text-stroke:0.8px #303e4f;">About this site</div></div>
 <div class="abs" id="panel" style="left:100px;top:345px;width:449px;height:876px;overflow:visible;opacity:0.65">
 <div class="abs" style="left:0;top:0;width:449px;height:876px;background:#fff"></div>
 <div class="abs" style="left:-212px;top:-420px;width:1824px;height:1444px">
 <svg class="abs" style="left:0;top:0" width="1824" height="1444" viewBox="0 0 1824 1444"><g stroke="#e3e3e3"><line x1="304.3" x2="619" y1="824.0" y2="824.0" stroke-width="1.2"/><line x1="304.3" x2="619" y1="807.8" y2="807.8" stroke-width="0.7"/><line x1="304.3" x2="619" y1="791.5" y2="791.5" stroke-width="1.2"/><line x1="304.3" x2="619" y1="775.2" y2="775.2" stroke-width="0.7"/><line x1="304.3" x2="619" y1="759.0" y2="759.0" stroke-width="1.2"/><line x1="304.3" x2="619" y1="742.8" y2="742.8" stroke-width="0.7"/><line x1="304.3" x2="619" y1="726.5" y2="726.5" stroke-width="1.2"/><line x1="304.3" x2="619" y1="710.2" y2="710.2" stroke-width="0.7"/><line x1="304.3" x2="619" y1="694.0" y2="694.0" stroke-width="1.2"/><line x1="304.3" x2="619" y1="677.8" y2="677.8" stroke-width="0.7"/><line y1="664" y2="831" x1="313.0" x2="313.0" stroke-width="1.2"/><line y1="664" y2="831" x1="358.8" x2="358.8" stroke-width="0.7"/><line y1="664" y2="831" x1="404.7" x2="404.7" stroke-width="1.2"/><line y1="664" y2="831" x1="450.5" x2="450.5" stroke-width="0.7"/><line y1="664" y2="831" x1="496.3" x2="496.3" stroke-width="1.2"/><line y1="664" y2="831" x1="542.1" x2="542.1" stroke-width="0.7"/><line y1="664" y2="831" x1="588.0" x2="588.0" stroke-width="1.2"/></g><rect x="304.3" y="664" width="314.7" height="167" fill="none" stroke="#7f7f7f" stroke-width="1.5"/><g stroke="#333" stroke-width="2"><line x1="298" x2="304" y1="824.0" y2="824.0"/><line x1="298" x2="304" y1="791.5" y2="791.5"/><line x1="298" x2="304" y1="759.0" y2="759.0"/><line x1="298" x2="304" y1="726.5" y2="726.5"/><line x1="298" x2="304" y1="694.0" y2="694.0"/><line x1="313.0" x2="313.0" y1="831" y2="837"/><line x1="404.7" x2="404.7" y1="831" y2="837"/><line x1="496.3" x2="496.3" y1="831" y2="837"/><line x1="588.0" x2="588.0" y1="831" y2="837"/></g><path d="M316.4,823.9 L331.3,823.9 L336.3,820.6 L349.6,819 L362.9,815.6 L379.5,810.6 L386,808 L391.2,799 L399.5,790.7 L406,794 L411,796 L417.7,805.6 L425,803 L434.4,787.4 L440,792 L447.7,807.3 L454,804 L462.6,795.7 L470,799 L479.3,805.6 L489.2,799 L494.2,789 L497.5,769 L500.9,732.5 L503.2,671 L505.9,692.6 L508.5,732.5 L510.8,747.5 L514.2,755.8 L515.8,742.5 L518.5,755.8 L520.8,772.4 L525.8,795.7 L532.4,800.7 L539.1,795.7 L547.4,775.7 L554,782.4 L560.7,800.7 L570.7,805.6 L575.7,809 L585.6,797.3 L592.3,805.6 L597.3,813.9 L605.6,818.9" fill="none" stroke="#bb5a22" stroke-width="1.8" stroke-linejoin="round"/><g fill="#bb5a22"><circle cx="316.4" cy="823.9" r="2.6"/><circle cx="318.1" cy="823.9" r="2.6"/><circle cx="319.9" cy="823.9" r="2.6"/><circle cx="321.6" cy="823.9" r="2.6"/><circle cx="323.4" cy="823.9" r="2.6"/><circle cx="325.1" cy="823.9" r="2.6"/><circle cx="326.9" cy="823.9" r="2.6"/><circle cx="328.6" cy="823.9" r="2.6"/><circle cx="330.4" cy="823.9" r="2.6"/><circle cx="332.1" cy="823.3" r="2.6"/><circle cx="333.9" cy="822.2" r="2.6"/><circle cx="335.6" cy="821.0" r="2.6"/><circle cx="337.4" cy="820.5" r="2.6"/><circle cx="339.1" cy="820.3" r="2.6"/><circle cx="340.9" cy="820.0" r="2.6"/><circle cx="342.6" cy="819.8" r="2.6"/><circle cx="344.4" cy="819.6" r="2.6"/><circle cx="346.1" cy="819.4" r="2.6"/><circle cx="347.9" cy="819.2" r="2.6"/><circle cx="349.6" cy="819.0" r="2.6"/><circle cx="351.4" cy="818.5" r="2.6"/><circle cx="353.1" cy="818.1" r="2.6"/><circle cx="354.9" cy="817.6" r="2.6"/><circle cx="356.6" cy="817.2" r="2.6"/><circle cx="358.4" cy="816.8" r="2.6"/><circle cx="360.1" cy="816.3" r="2.6"/><circle cx="361.9" cy="815.9" r="2.6"/><circle cx="363.6" cy="815.4" r="2.6"/><circle cx="365.4" cy="814.8" r="2.6"/><circle cx="367.1" cy="814.3" r="2.6"/><circle cx="368.9" cy="813.8" r="2.6"/><circle cx="370.6" cy="813.3" r="2.6"/><circle cx="372.4" cy="812.7" r="2.6"/><circle cx="374.1" cy="812.2" r="2.6"/><circle cx="375.9" cy="811.7" r="2.6"/><circle cx="377.6" cy="811.2" r="2.6"/><circle cx="379.4" cy="810.6" r="2.6"/><circle cx="381.1" cy="809.9" r="2.6"/><circle cx="382.9" cy="809.2" r="2.6"/><circle cx="384.6" cy="808.5" r="2.6"/><circle cx="386.4" cy="807.3" r="2.6"/><circle cx="388.1" cy="804.3" r="2.6"/><circle cx="389.9" cy="801.2" r="2.6"/><circle cx="391.6" cy="798.6" r="2.6"/><circle cx="393.4" cy="796.8" r="2.6"/><circle cx="395.1" cy="795.1" r="2.6"/><circle cx="396.9" cy="793.3" r="2.6"/><circle cx="398.6" cy="791.6" r="2.6"/><circle cx="400.4" cy="791.2" r="2.6"/><circle cx="402.1" cy="792.0" r="2.6"/><circle cx="403.9" cy="792.9" r="2.6"/><circle cx="405.6" cy="793.8" r="2.6"/><circle cx="407.4" cy="794.6" r="2.6"/><circle cx="409.1" cy="795.3" r="2.6"/><circle cx="410.9" cy="796.0" r="2.6"/><circle cx="412.6" cy="798.4" r="2.6"/><circle cx="414.4" cy="800.9" r="2.6"/><circle cx="416.1" cy="803.4" r="2.6"/><circle cx="417.9" cy="805.5" r="2.6"/><circle cx="419.6" cy="804.9" r="2.6"/><circle cx="421.4" cy="804.3" r="2.6"/><circle cx="423.1" cy="803.7" r="2.6"/><circle cx="424.9" cy="803.0" r="2.6"/><circle cx="426.6" cy="800.3" r="2.6"/><circle cx="428.4" cy="797.4" r="2.6"/><circle cx="430.1" cy="794.5" r="2.6"/><circle cx="431.9" cy="791.5" r="2.6"/><circle cx="433.6" cy="788.6" r="2.6"/><circle cx="435.4" cy="788.2" r="2.6"/><circle cx="437.1" cy="789.7" r="2.6"/><circle cx="438.9" cy="791.1" r="2.6"/><circle cx="440.6" cy="793.3" r="2.6"/><circle cx="442.4" cy="796.8" r="2.6"/><circle cx="444.1" cy="800.2" r="2.6"/><circle cx="445.9" cy="803.7" r="2.6"/><circle cx="447.6" cy="807.2" r="2.6"/><circle cx="449.4" cy="806.4" r="2.6"/><circle cx="451.1" cy="805.5" r="2.6"/><circle cx="452.9" cy="804.6" r="2.6"/><circle cx="454.6" cy="803.4" r="2.6"/><circle cx="456.4" cy="801.7" r="2.6"/><circle cx="458.1" cy="800.0" r="2.6"/><circle cx="459.9" cy="798.3" r="2.6"/><circle cx="461.6" cy="796.6" r="2.6"/><circle cx="463.4" cy="796.1" r="2.6"/><circle cx="465.1" cy="796.8" r="2.6"/><circle cx="466.9" cy="797.6" r="2.6"/><circle cx="468.6" cy="798.4" r="2.6"/><circle cx="470.4" cy="799.3" r="2.6"/><circle cx="472.1" cy="800.5" r="2.6"/><circle cx="473.9" cy="801.8" r="2.6"/><circle cx="475.6" cy="803.0" r="2.6"/><circle cx="477.4" cy="804.3" r="2.6"/><circle cx="479.1" cy="805.5" r="2.6"/><circle cx="480.9" cy="804.5" r="2.6"/><circle cx="482.6" cy="803.4" r="2.6"/><circle cx="484.4" cy="802.2" r="2.6"/><circle cx="486.1" cy="801.0" r="2.6"/><circle cx="487.9" cy="799.9" r="2.6"/><circle cx="489.6" cy="798.1" r="2.6"/><circle cx="491.4" cy="794.6" r="2.6"/><circle cx="493.1" cy="791.1" r="2.6"/><circle cx="494.9" cy="784.8" r="2.6"/><circle cx="496.6" cy="774.2" r="2.6"/><circle cx="498.4" cy="759.3" r="2.6"/><circle cx="500.1" cy="740.6" r="2.6"/><circle cx="501.9" cy="705.8" r="2.6"/><circle cx="503.6" cy="674.6" r="2.6"/><circle cx="505.4" cy="688.6" r="2.6"/><circle cx="507.1" cy="711.8" r="2.6"/><circle cx="508.9" cy="735.1" r="2.6"/><circle cx="510.6" cy="746.5" r="2.6"/><circle cx="512.4" cy="751.4" r="2.6"/><circle cx="514.1" cy="755.7" r="2.6"/><circle cx="515.9" cy="743.0" r="2.6"/><circle cx="517.6" cy="751.6" r="2.6"/><circle cx="519.4" cy="762.3" r="2.6"/><circle cx="521.1" cy="774.0" r="2.6"/><circle cx="522.9" cy="782.2" r="2.6"/><circle cx="524.6" cy="790.3" r="2.6"/><circle cx="526.4" cy="796.2" r="2.6"/><circle cx="528.1" cy="797.5" r="2.6"/><circle cx="529.9" cy="798.8" r="2.6"/><circle cx="531.6" cy="800.1" r="2.6"/><circle cx="533.4" cy="800.0" r="2.6"/><circle cx="535.1" cy="798.6" r="2.6"/><circle cx="536.9" cy="797.3" r="2.6"/><circle cx="538.6" cy="796.0" r="2.6"/><circle cx="540.4" cy="792.6" r="2.6"/><circle cx="542.1" cy="788.4" r="2.6"/><circle cx="543.9" cy="784.1" r="2.6"/><circle cx="545.6" cy="779.9" r="2.6"/><circle cx="547.4" cy="775.7" r="2.6"/><circle cx="549.1" cy="777.5" r="2.6"/><circle cx="550.9" cy="779.3" r="2.6"/><circle cx="552.6" cy="781.0" r="2.6"/><circle cx="554.4" cy="783.5" r="2.6"/><circle cx="556.1" cy="788.3" r="2.6"/><circle cx="557.9" cy="793.1" r="2.6"/><circle cx="559.6" cy="797.8" r="2.6"/><circle cx="561.4" cy="801.0" r="2.6"/><circle cx="563.1" cy="801.9" r="2.6"/><circle cx="564.9" cy="802.8" r="2.6"/><circle cx="566.6" cy="803.6" r="2.6"/><circle cx="568.4" cy="804.5" r="2.6"/><circle cx="570.1" cy="805.3" r="2.6"/><circle cx="571.9" cy="806.4" r="2.6"/><circle cx="573.6" cy="807.6" r="2.6"/><circle cx="575.4" cy="808.8" r="2.6"/><circle cx="577.1" cy="807.3" r="2.6"/><circle cx="578.9" cy="805.2" r="2.6"/><circle cx="580.6" cy="803.2" r="2.6"/><circle cx="582.4" cy="801.1" r="2.6"/><circle cx="584.1" cy="799.0" r="2.6"/><circle cx="585.9" cy="797.7" r="2.6"/><circle cx="587.6" cy="799.8" r="2.6"/><circle cx="589.4" cy="802.0" r="2.6"/><circle cx="591.1" cy="804.2" r="2.6"/><circle cx="592.9" cy="806.6" r="2.6"/><circle cx="594.6" cy="809.5" r="2.6"/><circle cx="596.4" cy="812.4" r="2.6"/><circle cx="598.1" cy="814.4" r="2.6"/><circle cx="599.9" cy="815.5" r="2.6"/><circle cx="601.6" cy="816.5" r="2.6"/><circle cx="603.4" cy="817.6" r="2.6"/><circle cx="605.1" cy="818.6" r="2.6"/></g><g stroke="#e3e3e3"><line x1="313.5" x2="618.8" y1="1058.4" y2="1058.4" stroke-width="1.2"/><line x1="313.5" x2="618.8" y1="1035.8" y2="1035.8" stroke-width="0.7"/><line x1="313.5" x2="618.8" y1="1013.2" y2="1013.2" stroke-width="1.2"/><line x1="313.5" x2="618.8" y1="990.6" y2="990.6" stroke-width="0.7"/><line x1="313.5" x2="618.8" y1="968.0" y2="968.0" stroke-width="1.2"/><line x1="313.5" x2="618.8" y1="945.4" y2="945.4" stroke-width="0.7"/><line x1="313.5" x2="618.8" y1="922.8" y2="922.8" stroke-width="1.2"/><line x1="313.5" x2="618.8" y1="900.2" y2="900.2" stroke-width="0.7"/><line y1="898" y2="1065" x1="322.0" x2="322.0" stroke-width="1.2"/><line y1="898" y2="1065" x1="366.4" x2="366.4" stroke-width="0.7"/><line y1="898" y2="1065" x1="410.8" x2="410.8" stroke-width="1.2"/><line y1="898" y2="1065" x1="455.2" x2="455.2" stroke-width="0.7"/><line y1="898" y2="1065" x1="499.6" x2="499.6" stroke-width="1.2"/><line y1="898" y2="1065" x1="544.0" x2="544.0" stroke-width="0.7"/><line y1="898" y2="1065" x1="588.4" x2="588.4" stroke-width="1.2"/></g><rect x="313.5" y="898" width="305.29999999999995" height="167" fill="none" stroke="#7f7f7f" stroke-width="1.5"/><g stroke="#333" stroke-width="2"><line x1="307" x2="313" y1="1058.4" y2="1058.4"/><line x1="307" x2="313" y1="1013.2" y2="1013.2"/><line x1="307" x2="313" y1="968.0" y2="968.0"/><line x1="307" x2="313" y1="922.8" y2="922.8"/><line x1="322.0" x2="322.0" y1="1065" y2="1071"/><line x1="410.8" x2="410.8" y1="1065" y2="1071"/><line x1="499.6" x2="499.6" y1="1065" y2="1071"/><line x1="588.4" x2="588.4" y1="1065" y2="1071"/></g><path d="M326.2,1057.8 L348.5,1057.8 L364.4,1055.5 L380.3,1050.8 L396.2,1046 L412.1,1036.5 L428,1030.1 L443.9,1020.6 L459.8,1014.2 L475.7,1006.3 L491.6,998.3 L498.5,990.4 L504.3,974.5 L512.2,955.4 L523.4,944.3 L539.3,936.3 L555.2,923.6 L571.1,916.6 L587,909.3 L596.5,906.1 L606,905.5" fill="none" stroke="#bb5a22" stroke-width="5.2" stroke-linecap="round" stroke-linejoin="round"/><g font-family="Liberation Sans"><text x="293.8" y="700.8" text-anchor="end" font-size="16" fill="#4d4d4d" textLength="29.9" lengthAdjust="spacingAndGlyphs">20M</text><text x="293.8" y="733.3" text-anchor="end" font-size="16" fill="#4d4d4d" textLength="29.9" lengthAdjust="spacingAndGlyphs">15M</text><text x="293.8" y="765.8" text-anchor="end" font-size="16" fill="#4d4d4d" textLength="29.9" lengthAdjust="spacingAndGlyphs">10M</text><text x="293.8" y="798.3" text-anchor="end" font-size="16" fill="#4d4d4d" textLength="20.5" lengthAdjust="spacingAndGlyphs">5M</text><text x="293.8" y="830.8" text-anchor="end" font-size="16" fill="#4d4d4d" textLength="20.5" lengthAdjust="spacingAndGlyphs">0M</text><text x="312.8" y="852.8" text-anchor="middle" font-size="16" fill="#4d4d4d" textLength="34" lengthAdjust="spacingAndGlyphs">2020</text><text x="404.4" y="852.8" text-anchor="middle" font-size="16" fill="#4d4d4d" textLength="34" lengthAdjust="spacingAndGlyphs">2021</text><text x="496.0" y="852.8" text-anchor="middle" font-size="16" fill="#4d4d4d" textLength="34" lengthAdjust="spacingAndGlyphs">2022</text><text x="587.5999999999999" y="852.8" text-anchor="middle" font-size="16" fill="#4d4d4d" textLength="34" lengthAdjust="spacingAndGlyphs">2023</text><text x="462.5" y="875.3" text-anchor="middle" font-size="19" fill="#000" textLength="39" lengthAdjust="spacingAndGlyphs">Date</text><text x="302.4" y="928.2" text-anchor="end" font-size="16" fill="#4d4d4d" textLength="38.6" lengthAdjust="spacingAndGlyphs">600M</text><text x="302.4" y="973.5" text-anchor="end" font-size="16" fill="#4d4d4d" textLength="38.6" lengthAdjust="spacingAndGlyphs">400M</text><text x="302.4" y="1018.8000000000001" text-anchor="end" font-size="16" fill="#4d4d4d" textLength="38.6" lengthAdjust="spacingAndGlyphs">200M</text><text x="302.4" y="1064.1" text-anchor="end" font-size="16" fill="#4d4d4d" textLength="20.6" lengthAdjust="spacingAndGlyphs">0M</text><text x="321.6" y="1086.6" text-anchor="middle" font-size="16" fill="#4d4d4d" textLength="34.6" lengthAdjust="spacingAndGlyphs">2020</text><text x="410.5" y="1086.6" text-anchor="middle" font-size="16" fill="#4d4d4d" textLength="34.6" lengthAdjust="spacingAndGlyphs">2021</text><text x="499.40000000000003" y="1086.6" text-anchor="middle" font-size="16" fill="#4d4d4d" textLength="34.6" lengthAdjust="spacingAndGlyphs">2022</text><text x="588.3000000000001" y="1086.6" text-anchor="middle" font-size="16" fill="#4d4d4d" textLength="34.6" lengthAdjust="spacingAndGlyphs">2023</text><text x="466.2" y="1109.8" text-anchor="middle" font-size="19" fill="#000" textLength="39" lengthAdjust="spacingAndGlyphs">Date</text><text transform="translate(254.2,747.5) rotate(-90)" text-anchor="middle" font-size="19.5" fill="#000" textLength="173" lengthAdjust="spacingAndGlyphs">New cases (weekly)</text><text transform="translate(254.4,981.5) rotate(-90)" text-anchor="middle" font-size="19.5" fill="#000" textLength="152.4" lengthAdjust="spacingAndGlyphs">Cumulative cases</text></g></svg><div class="t" style="left:259.0px;top:446.0px;font-size:50.29px;line-height:50.29px;color:#2f3742;transform:scaleX(0.8952);transform-origin:0 0;">675,048,320 cases</div><div class="t" style="left:381.0px;top:515.0px;font-size:35.76px;line-height:35.76px;color:#2f3742;transform:scaleX(0.9354);transform-origin:0 0;">6,799,607 deaths</div><div class="t" style="left:483.6px;top:572.0px;font-size:23.40px;line-height:23.40px;color:#2f3742;">09 March 2023</div><div class="t" style="left:327.0px;top:615.0px;font-size:23.26px;line-height:23.26px;color:#2f3742;transform:scaleX(1.0043);transform-origin:0 0;">202 countries/regions affected</div><div class="t" style="left:230.8px;top:1143.0px;font-size:29.07px;line-height:29.07px;color:#2f3742;transform:scaleX(0.8904);transform-origin:0 0;">Select mapping date</div><div class="abs" style="left:148px;top:1198px;width:51px;height:61px;border-radius:7px;background:#c8cdd1"></div>
<svg class="abs" style="left:0;top:0" width="1824" height="1444" viewBox="0 0 1824 1444">
<path d="M188 1217.5c-1.2.5-2.4.9-3.7 1 1.3-.8 2.3-2 2.8-3.5-1.2.7-2.6 1.2-4 1.5-1.2-1.3-2.8-2-4.7-2-3.5 0-6.4 2.9-6.4 6.4 0 .5.1 1 .2 1.5-5.3-.3-10-2.8-13.2-6.7-.6 1-.9 2-.9 3.2 0 2.2 1.1 4.2 2.9 5.3-1 0-2-.3-2.9-.8v.1c0 3.1 2.2 5.7 5.1 6.3-.5.1-1.1.2-1.7.2-.4 0-.8 0-1.2-.1.8 2.5 3.2 4.4 6 4.5-2.2 1.7-5 2.8-8 2.8-.5 0-1 0-1.5-.1 2.8 1.8 6.2 2.9 9.8 2.9 11.8 0 18.2-9.8 18.2-18.2v-.8c1.3-.9 2.3-2 3.2-3.3z" fill="#e8ebee"/>
</svg><div class="abs" style="left:230.8px;top:1197px;width:84px;height:25.8px;background:#b0b4b8;border-radius:3px;opacity:.35"></div>
<div class="t" style="left:236.7px;top:1203.0px;font-size:16.86px;line-height:16.86px;color:#333;transform:scaleX(1.0221);transform-origin:0 0;-webkit-text-stroke:0.35px #eceeef;">22 Jan 20</div>
<div class="abs" style="left:230.8px;top:1242.2px;width:392px;height:14px;background:#658dd0;border-radius:7px 0 0 7px"></div>
<div class="abs" style="left:573px;top:1197.6px;width:96.7px;height:29px;background:#658dd0;border-radius:5px"></div>
<div class="t" style="left:577.6px;top:1203.0px;font-size:19.04px;line-height:19.04px;color:#fff;-webkit-text-stroke:0.4px #658dd0;">09 Mar 23</div>
<div class="abs" style="left:602px;top:1227.5px;width:38px;height:38px;border-radius:50%;background:#dcd8d5;border:2.5px solid #8c8580"></div>
<svg class="abs" style="left:0;top:0" width="1824" height="1444" viewBox="0 0 1824 1444"><path d="M619 1263 L638.7 1272 L619 1281Z" fill="#8fd0bd"/></svg>
<svg class="abs" style="left:0;top:0" width="1824" height="1444" viewBox="0 0 1824 1444">
<g font-family="Liberation Serif" fill="#8c8c8c" font-size="16.5">
<text x="220" y="1204.3" textLength="73" lengthAdjust="spacingAndGlyphs">LONDON</text>
<text x="220" y="1217.5" textLength="73" lengthAdjust="spacingAndGlyphs">SCHOOL of</text>
<text x="220" y="1231.3" textLength="73" lengthAdjust="spacingAndGlyphs">HYGIENE</text>
<text x="220" y="1244.2" textLength="73" lengthAdjust="spacingAndGlyphs">&amp;TROPICAL</text>
<text x="220" y="1257" textLength="73" lengthAdjust="spacingAndGlyphs">MEDICINE</text>
</g>
<circle cx="330.8" cy="1224" r="32.5" fill="none" stroke="#8f8f8f" stroke-width="1.6"/>
<g fill="#7d7d7d">
<path d="M305 1214 q4 -4 9 -2 l4 6 q10 -2 22 0 q4 1 5 5 l0 12 l-2 0 l-1 -9 l-3 2 l0 9 l-2 0 l-1 -10 q-8 2 -16 0 l-2 10 l-2 0 l0 -11 q-3 3 -5 10 l-2 0 q1 -8 4 -13 q-4 -4 -6 -9z"/>
<path d="M324 1206 q-2 -10 2 -16 q4 4 3 10 q5 -8 9 -6 q-3 5 -7 9 q7 -2 9 2 q-6 1 -10 3 l0 10 l-2 0z" fill="#8a8a8a"/>
<path d="M346 1203 q4 -3 7 1 q0 4 -3 6 l4 8 l2 12 l-9 0 l0 -10 q-3 -6 -1 -17z"/>
</g>
<circle cx="352" cy="1240" r="8" fill="none" stroke="#7d7d7d" stroke-width="1.4"/>
<path d="M318 1252 q3 -3 6 0 q3 3 6 0 q3 -3 6 0" fill="none" stroke="#7d7d7d" stroke-width="1.4"/>
</svg>
 </div>
</div>
 <div class="abs" style="left:0;top:0;width:1600px;height:1221px">
  <div class="abs" style="left:1339px;top:557px;width:241px;height:320px;border-radius:9px;background:rgba(255,255,255,0.8);box-shadow:0 0 30px rgba(0,0,0,0.2)"></div>
  <div class="abs" style="left:1256.4px;top:897.1px;width:322.4px;height:270.3px;border-radius:10px;border:4px solid rgba(0,0,0,0.2);background:#fff;background-clip:padding-box"></div><div class="abs" style="left:1272.2px;top:923.2px;width:23.3px;height:23.3px;border-radius:5px;background:linear-gradient(#4f93f7,#2f74ee)"></div><svg class="abs" style="left:1272.2px;top:923.2px" width="24" height="24" viewBox="0 0 24 24"><path d="M6 12.5 L10 17 L18 7" fill="none" stroke="#fff" stroke-width="3" stroke-linecap="round" stroke-linejoin="round"/></svg><div class="abs" style="left:1272.2px;top:971.2px;width:23.3px;height:23.3px;border-radius:5px;background:#fff;border:1.2px solid #c9c9c9"></div><div class="abs" style="left:1272.2px;top:1019.2px;width:23.3px;height:23.3px;border-radius:5px;background:#fff;border:1.2px solid #c9c9c9"></div><div class="abs" style="left:1272.2px;top:1067.2px;width:23.3px;height:23.3px;border-radius:5px;background:#fff;border:1.2px solid #c9c9c9"></div><div class="abs" style="left:1272.2px;top:1115.2px;width:23.3px;height:23.3px;border-radius:5px;background:#fff;border:1.2px solid #c9c9c9"></div>
 </div>
 <div class="abs" style="left:-112px;top:-75px;width:1824px;height:1444px"><div class="t" style="left:1467.6px;top:653.0px;font-size:23.40px;line-height:23.40px;color:#555;font-weight:bold;transform:scaleX(1.0224);transform-origin:0 0;">Deaths per million</div><div class="abs" style="left:1467px;top:688px;width:36px;height:36px;background:#FEEDDE;opacity:0.5;filter:saturate(0.8)"></div><div class="t" style="left:1519.8px;top:693.0px;font-size:28.00px;line-height:28.00px;color:#555;">0 – 10</div><div class="abs" style="left:1467px;top:724px;width:36px;height:36px;background:#FDD0A2;opacity:0.5;filter:saturate(0.8)"></div><div class="t" style="left:1519.8px;top:729.0px;font-size:28.00px;line-height:28.00px;color:#555;">10 – 50</div><div class="abs" style="left:1467px;top:760px;width:36px;height:36px;background:#FDAE6B;opacity:0.5;filter:saturate(0.8)"></div><div class="t" style="left:1519.8px;top:765.0px;font-size:28.00px;line-height:28.00px;color:#555;">50 – 100</div><div class="abs" style="left:1467px;top:796px;width:36px;height:36px;background:#FD8D3C;opacity:0.5;filter:saturate(0.8)"></div><div class="t" style="left:1519.8px;top:801.0px;font-size:28.00px;line-height:28.00px;color:#555;">100 – 500</div><div class="abs" style="left:1467px;top:832px;width:36px;height:36px;background:#E6550D;opacity:0.5;filter:saturate(0.8)"></div><div class="t" style="left:1519.8px;top:837.0px;font-size:28.00px;line-height:28.00px;color:#555;">500 – 1,000</div><div class="abs" style="left:1467px;top:868px;width:36px;height:36px;background:#A63603;opacity:0.5;filter:saturate(0.8)"></div><div class="t" style="left:1519.8px;top:873.0px;font-size:28.00px;line-height:28.00px;color:#555;">1,000 – Inf</div><div class="abs" style="left:1467px;top:904px;width:36px;height:36px;background:#808080;opacity:0.5;filter:saturate(0.8)"></div><div class="t" style="left:1519.8px;top:909.0px;font-size:28.00px;line-height:28.00px;color:#555;">NA</div><div class="t" style="left:1414.4px;top:997.0px;font-size:24.27px;line-height:24.27px;color:#333;transform:scaleX(0.9138);transform-origin:0 0;-webkit-text-stroke:0.55px #fff;">2019-COVID (new)</div><div class="t" style="left:1414.4px;top:1045.0px;font-size:24.27px;line-height:24.27px;color:#333;transform:scaleX(0.9101);transform-origin:0 0;-webkit-text-stroke:0.55px #fff;">2019-COVID (cumulative)</div><div class="t" style="left:1414.4px;top:1093.0px;font-size:24.27px;line-height:24.27px;color:#333;transform:scaleX(0.9385);transform-origin:0 0;-webkit-text-stroke:0.55px #fff;">2003-SARS</div><div class="t" style="left:1414.4px;top:1141.0px;font-size:24.27px;line-height:24.27px;color:#333;transform:scaleX(0.9267);transform-origin:0 0;-webkit-text-stroke:0.55px #fff;">2009-H1N1 (swine flu)</div><div class="t" style="left:1414.4px;top:1189.0px;font-size:24.27px;line-height:24.27px;color:#333;transform:scaleX(0.9390);transform-origin:0 0;-webkit-text-stroke:0.55px #fff;">2014-Ebola</div></div>
 <div class="abs" style="left:0;top:0;width:1600px;height:1221px"><div class="abs" style="left:654px;top:1189px;width:946px;height:32px;background:rgba(255,255,255,0.8)"></div>
<div class="t" style="left:664px;top:1194.5px;font-size:21.80px;line-height:21.80px;transform:scaleX(1.0206);transform-origin:0 0"><span style="color:#3d77a6">Leaflet</span><span style="color:#333"> | © </span><span style="color:#3d77a6">OpenStreetMap</span><span style="color:#333"> contributors, </span><span style="color:#3d77a6">CC-BY-SA</span><span style="color:#333">, © </span><span style="color:#3d77a6">OpenStreetMap</span><span style="color:#333"> contributors © </span><span style="color:#3d77a6">CARTO</span></div></div>
</div>
<div id="border"></div>
</body></html>
